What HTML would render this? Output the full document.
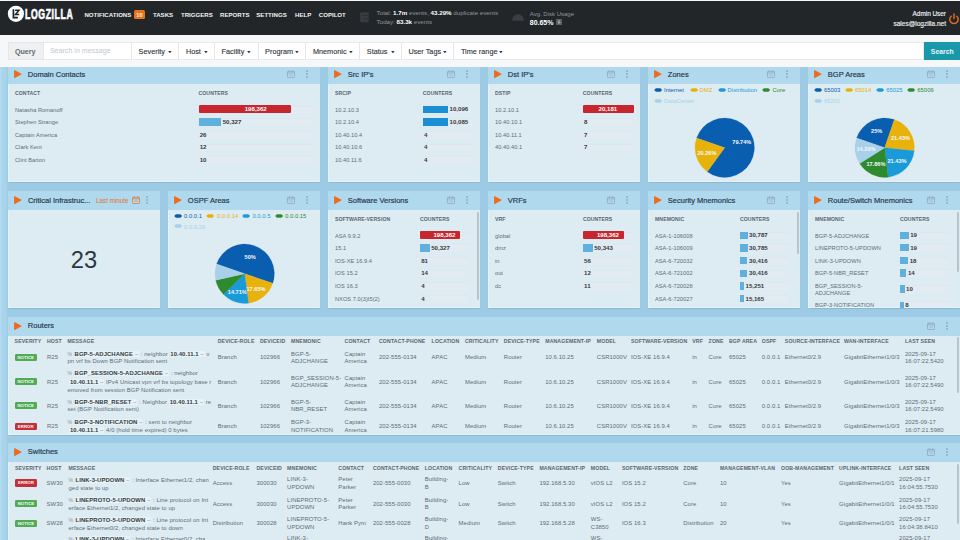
<!DOCTYPE html>
<html><head><meta charset="utf-8"><style>
html,body{margin:0;padding:0;width:960px;height:540px;overflow:hidden;background:#f6f7f9;font-family:"Liberation Sans", sans-serif;}
.t{position:absolute;white-space:nowrap;line-height:1;}
.r{position:absolute;}
svg{position:absolute;overflow:visible;}
</style></head><body>

<div class="r" style="left:0.00px;top:1.00px;width:960.00px;height:34.00px;background:#222629;"></div>
<svg style="left:0;top:0" width="80" height="35" viewBox="0 0 80 35"><circle cx="15.9" cy="13.8" r="8.1" fill="#fff"/><path d="M13.4 9.3 V17.7 H17.9" stroke="#1f2226" stroke-width="1.7" fill="none"/><path d="M15.1 10.2 H19.0 L15.4 14.5 H19.2" stroke="#1f2226" stroke-width="1.5" fill="none" stroke-linejoin="miter"/></svg>
<div class="t" style="left:25.3px;top:6.6px;font-size:14px;font-weight:bold;color:#fff;transform:scaleX(0.62);transform-origin:0 0;letter-spacing:1.0px;-webkit-text-stroke:0.7px #fff">LOGZILLA</div>
<div class="t" style="left:84.40px;top:12.00px;font-size:6.1px;color:#f2f2f2;font-weight:bold;">NOTIFICATIONS</div>
<div class="t" style="left:152.90px;top:12.00px;font-size:6.1px;color:#f2f2f2;font-weight:bold;">TASKS</div>
<div class="t" style="left:181.00px;top:12.00px;font-size:6.1px;color:#f2f2f2;font-weight:bold;">TRIGGERS</div>
<div class="t" style="left:220.00px;top:12.00px;font-size:6.1px;color:#f2f2f2;font-weight:bold;">REPORTS</div>
<div class="t" style="left:256.25px;top:12.00px;font-size:6.1px;color:#f2f2f2;font-weight:bold;">SETTINGS</div>
<div class="t" style="left:295.00px;top:12.00px;font-size:6.1px;color:#f2f2f2;font-weight:bold;">HELP</div>
<div class="t" style="left:318.75px;top:12.00px;font-size:6.1px;color:#f2f2f2;font-weight:bold;">COPILOT</div>
<div class="r" style="left:134.00px;top:10.25px;width:10.75px;height:8.75px;background:#e8731c;border-radius:1.5px"></div>
<div class="t" style="left:-60.60px;width:400px;text-align:center;top:13.00px;font-size:5.6px;color:#fde7d0;font-weight:bold;">10</div>
<svg style="left:359.8px;top:11.8px" width="9" height="10.4" viewBox="0 0 9 10.4"><path d="M1.2 0.2 H7.6 Q8.7 0.2 8.7 1.3 V9.2 Q8.7 10.2 7.6 10.2 H1.2 Q0.2 10.2 0.2 9.2 V1.3 Q0.2 0.2 1.2 0.2Z" fill="#393d43"/><path d="M2.6 3.6 H8.7 M2.6 6.9 H8.7" stroke="#24272b" stroke-width="0.7"/></svg>
<div class="t" style="left:376.6px;top:10px;font-size:6.2px;color:#90959c">Total: <b style="color:#fff">1.7m</b> events, <b style="color:#fff">43.29%</b> duplicate events</div>
<div class="t" style="left:376.6px;top:19px;font-size:6.2px;color:#90959c">Today: <b style="color:#fff">83.3k</b> events</div>
<svg style="left:511px;top:12px" width="14" height="10" viewBox="0 0 14 10"><path d="M1 8.8 A6 6.5 0 0 1 13 8.8 Z" fill="#3b3f45"/></svg>
<div class="t" style="left:529.75px;top:11.00px;font-size:6.0px;color:#90959c;font-weight:normal;">Avg. Disk Usage</div>
<div class="t" style="left:529.75px;top:19.00px;font-size:7.0px;color:#fff;font-weight:bold;">80.65%</div>
<div class="r" style="left:555.60px;top:19.20px;width:6.20px;height:5.40px;background:#5a5e64;border-radius:0.5px"></div>
<svg style="left:555.6px;top:19.2px" width="6.2" height="5.4" viewBox="0 0 6.2 5.4"><path d="M3.1 0.9 V4.3 M1.8 3.1 L3.1 4.4 L4.4 3.1" stroke="#d0d2d4" stroke-width="0.7" fill="none"/></svg>
<div class="t" style="right:14.00px;top:11.00px;font-size:6.4px;color:#f0f0f0;font-weight:normal;-webkit-text-stroke:0.15px #f0f0f0">Admin User</div>
<div class="t" style="right:14.00px;top:21.00px;font-size:6.5px;color:#f0f0f0;font-weight:normal;-webkit-text-stroke:0.15px #f0f0f0">sales@logzilla.net</div>
<svg style="left:948px;top:12.5px" width="12" height="12" viewBox="0 0 12 12"><path d="M3.2 3.2 A4.2 4.2 0 1 0 8.8 3.2" stroke="#e06a24" stroke-width="1.5" fill="none" stroke-linecap="round"/><path d="M6 1 V5.4" stroke="#e06a24" stroke-width="1.5" stroke-linecap="round"/></svg>
<div class="r" style="left:8.00px;top:42.00px;width:916.00px;height:17.60px;background:#fff;box-shadow:inset 0 0 0 0.8px #e1e4e8"></div>
<div class="r" style="left:8.00px;top:42.00px;width:36.00px;height:17.60px;background:#eef0f2;box-shadow:inset 0 0 0 0.8px #e1e4e8"></div>
<div class="t" style="left:14.90px;top:49.00px;font-size:7.16px;color:#666b70;font-weight:bold;">Query</div>
<div class="t" style="left:49.90px;top:48.00px;font-size:7.1px;color:#c4c8cc;font-weight:normal;">Search in message</div>
<div class="r" style="left:178.30px;top:42.00px;width:0.70px;height:17.60px;background:#e4e7ea;"></div>
<div class="t" style="left:138.60px;top:48px;font-size:7.3px;color:#30363c;-webkit-text-stroke:0.12px #30363c">Severity</div>
<svg style="left:168.10px;top:50.50px" width="4" height="2.4" viewBox="0 0 4 2.4"><path d="M0.1 0.1 H3.7 L1.9 2.2Z" fill="#30363c"/></svg>
<div class="r" style="left:214.00px;top:42.00px;width:0.70px;height:17.60px;background:#e4e7ea;"></div>
<div class="t" style="left:185.90px;top:48px;font-size:7.3px;color:#30363c;-webkit-text-stroke:0.12px #30363c">Host</div>
<svg style="left:203.80px;top:50.50px" width="4" height="2.4" viewBox="0 0 4 2.4"><path d="M0.1 0.1 H3.7 L1.9 2.2Z" fill="#30363c"/></svg>
<div class="r" style="left:257.50px;top:42.00px;width:0.70px;height:17.60px;background:#e4e7ea;"></div>
<div class="t" style="left:221.60px;top:48px;font-size:7.3px;color:#30363c;-webkit-text-stroke:0.12px #30363c">Facility</div>
<svg style="left:247.30px;top:50.50px" width="4" height="2.4" viewBox="0 0 4 2.4"><path d="M0.1 0.1 H3.7 L1.9 2.2Z" fill="#30363c"/></svg>
<div class="r" style="left:305.30px;top:42.00px;width:0.70px;height:17.60px;background:#e4e7ea;"></div>
<div class="t" style="left:265.10px;top:48px;font-size:7.3px;color:#30363c;-webkit-text-stroke:0.12px #30363c">Program</div>
<svg style="left:295.10px;top:50.50px" width="4" height="2.4" viewBox="0 0 4 2.4"><path d="M0.1 0.1 H3.7 L1.9 2.2Z" fill="#30363c"/></svg>
<div class="r" style="left:359.20px;top:42.00px;width:0.70px;height:17.60px;background:#e4e7ea;"></div>
<div class="t" style="left:312.90px;top:48px;font-size:7.3px;color:#30363c;-webkit-text-stroke:0.12px #30363c">Mnemonic</div>
<svg style="left:349.00px;top:50.50px" width="4" height="2.4" viewBox="0 0 4 2.4"><path d="M0.1 0.1 H3.7 L1.9 2.2Z" fill="#30363c"/></svg>
<div class="r" style="left:400.80px;top:42.00px;width:0.70px;height:17.60px;background:#e4e7ea;"></div>
<div class="t" style="left:366.80px;top:48px;font-size:7.3px;color:#30363c;-webkit-text-stroke:0.12px #30363c">Status</div>
<svg style="left:390.60px;top:50.50px" width="4" height="2.4" viewBox="0 0 4 2.4"><path d="M0.1 0.1 H3.7 L1.9 2.2Z" fill="#30363c"/></svg>
<div class="r" style="left:453.30px;top:42.00px;width:0.70px;height:17.60px;background:#e4e7ea;"></div>
<div class="t" style="left:408.40px;top:48px;font-size:7.3px;color:#30363c;-webkit-text-stroke:0.12px #30363c">User Tags</div>
<svg style="left:443.10px;top:50.50px" width="4" height="2.4" viewBox="0 0 4 2.4"><path d="M0.1 0.1 H3.7 L1.9 2.2Z" fill="#30363c"/></svg>
<div class="t" style="left:460.90px;top:48px;font-size:7.3px;color:#30363c;-webkit-text-stroke:0.12px #30363c">Time range</div>
<svg style="left:499.40px;top:50.50px" width="4" height="2.4" viewBox="0 0 4 2.4"><path d="M0.1 0.1 H3.7 L1.9 2.2Z" fill="#30363c"/></svg>
<div class="r" style="left:131.00px;top:42.00px;width:0.70px;height:17.60px;background:#e4e7ea;"></div>
<div class="r" style="left:923.75px;top:42.00px;width:36.25px;height:17.60px;background:#1898a8;"></div>
<div class="t" style="left:742.30px;width:400px;text-align:center;top:49.00px;font-size:6.9px;color:#eaf6f8;font-weight:bold;">Search</div>
<div class="r" style="left:0.00px;top:66.50px;width:960.00px;height:480.00px;background:#9dcbe5;"></div>
<div class="r" style="left:0.00px;top:66.50px;width:8.00px;height:480.00px;background:linear-gradient(to right,#bde0f2 0,#abd6ed 1.2px,#a6d2eb 6px,#9ccbe4 8px);"></div>
<div class="r" style="left:8.00px;top:67.00px;width:312.00px;height:17.00px;background:#b0d9ee;"></div>
<div class="r" style="left:8.00px;top:84.00px;width:312.00px;height:98.20px;background:#ddecf2;box-shadow:0 0.9px 0.9px rgba(70,120,150,0.22), inset 0 -0.8px 0 rgba(245,252,255,0.55), inset 0.8px 0 0 rgba(245,252,255,0.45)"></div>
<svg style="left:13.90px;top:70.00px" width="8" height="9" viewBox="0 0 8 9"><path d="M0.5 0.5 L7.2 4.1 L0.5 7.7 Z" fill="#ec6a1c" stroke="#ec6a1c" stroke-width="0.8" stroke-linejoin="round"/></svg>
<div class="t" style="left:27.80px;top:71.00px;font-size:7.5px;color:#27384a;font-weight:normal;-webkit-text-stroke:0.18px #27384a">Domain Contacts</div>
<svg style="left:287.00px;top:70.40px" width="8" height="8" viewBox="0 0 8 8"><rect x="0.5" y="1.3" width="7" height="6.2" rx="0.6" stroke="#8aa3b4" stroke-width="0.7" fill="none"/><path d="M0.5 2.9 H7.5 M2.2 0.3 V2 M5.8 0.3 V2" stroke="#8aa3b4" stroke-width="0.7"/><rect x="2.2" y="4.3" width="3.6" height="1.6" fill="#8aa3b4" opacity="0.35"/></svg>
<svg style="left:305.70px;top:70.20px" width="2" height="8" viewBox="0 0 2 8"><circle cx="1" cy="1" r="0.8" fill="#7d93a3"/><circle cx="1" cy="4" r="0.8" fill="#7d93a3"/><circle cx="1" cy="7" r="0.8" fill="#7d93a3"/></svg>
<div class="r" style="left:328.00px;top:67.00px;width:152.00px;height:17.00px;background:#b0d9ee;"></div>
<div class="r" style="left:328.00px;top:84.00px;width:152.00px;height:98.20px;background:#ddecf2;box-shadow:0 0.9px 0.9px rgba(70,120,150,0.22), inset 0 -0.8px 0 rgba(245,252,255,0.55), inset 0.8px 0 0 rgba(245,252,255,0.45)"></div>
<svg style="left:333.90px;top:70.00px" width="8" height="9" viewBox="0 0 8 9"><path d="M0.5 0.5 L7.2 4.1 L0.5 7.7 Z" fill="#ec6a1c" stroke="#ec6a1c" stroke-width="0.8" stroke-linejoin="round"/></svg>
<div class="t" style="left:347.80px;top:71.00px;font-size:7.5px;color:#27384a;font-weight:normal;-webkit-text-stroke:0.18px #27384a">Src IP's</div>
<svg style="left:447.00px;top:70.40px" width="8" height="8" viewBox="0 0 8 8"><rect x="0.5" y="1.3" width="7" height="6.2" rx="0.6" stroke="#8aa3b4" stroke-width="0.7" fill="none"/><path d="M0.5 2.9 H7.5 M2.2 0.3 V2 M5.8 0.3 V2" stroke="#8aa3b4" stroke-width="0.7"/><rect x="2.2" y="4.3" width="3.6" height="1.6" fill="#8aa3b4" opacity="0.35"/></svg>
<svg style="left:465.70px;top:70.20px" width="2" height="8" viewBox="0 0 2 8"><circle cx="1" cy="1" r="0.8" fill="#7d93a3"/><circle cx="1" cy="4" r="0.8" fill="#7d93a3"/><circle cx="1" cy="7" r="0.8" fill="#7d93a3"/></svg>
<div class="r" style="left:488.00px;top:67.00px;width:152.00px;height:17.00px;background:#b0d9ee;"></div>
<div class="r" style="left:488.00px;top:84.00px;width:152.00px;height:98.20px;background:#ddecf2;box-shadow:0 0.9px 0.9px rgba(70,120,150,0.22), inset 0 -0.8px 0 rgba(245,252,255,0.55), inset 0.8px 0 0 rgba(245,252,255,0.45)"></div>
<svg style="left:493.90px;top:70.00px" width="8" height="9" viewBox="0 0 8 9"><path d="M0.5 0.5 L7.2 4.1 L0.5 7.7 Z" fill="#ec6a1c" stroke="#ec6a1c" stroke-width="0.8" stroke-linejoin="round"/></svg>
<div class="t" style="left:507.80px;top:71.00px;font-size:7.5px;color:#27384a;font-weight:normal;-webkit-text-stroke:0.18px #27384a">Dst IP's</div>
<svg style="left:607.00px;top:70.40px" width="8" height="8" viewBox="0 0 8 8"><rect x="0.5" y="1.3" width="7" height="6.2" rx="0.6" stroke="#8aa3b4" stroke-width="0.7" fill="none"/><path d="M0.5 2.9 H7.5 M2.2 0.3 V2 M5.8 0.3 V2" stroke="#8aa3b4" stroke-width="0.7"/><rect x="2.2" y="4.3" width="3.6" height="1.6" fill="#8aa3b4" opacity="0.35"/></svg>
<svg style="left:625.70px;top:70.20px" width="2" height="8" viewBox="0 0 2 8"><circle cx="1" cy="1" r="0.8" fill="#7d93a3"/><circle cx="1" cy="4" r="0.8" fill="#7d93a3"/><circle cx="1" cy="7" r="0.8" fill="#7d93a3"/></svg>
<div class="r" style="left:648.00px;top:67.00px;width:152.00px;height:17.00px;background:#b0d9ee;"></div>
<div class="r" style="left:648.00px;top:84.00px;width:152.00px;height:98.20px;background:#ddecf2;box-shadow:0 0.9px 0.9px rgba(70,120,150,0.22), inset 0 -0.8px 0 rgba(245,252,255,0.55), inset 0.8px 0 0 rgba(245,252,255,0.45)"></div>
<svg style="left:653.90px;top:70.00px" width="8" height="9" viewBox="0 0 8 9"><path d="M0.5 0.5 L7.2 4.1 L0.5 7.7 Z" fill="#ec6a1c" stroke="#ec6a1c" stroke-width="0.8" stroke-linejoin="round"/></svg>
<div class="t" style="left:667.80px;top:71.00px;font-size:7.5px;color:#27384a;font-weight:normal;-webkit-text-stroke:0.18px #27384a">Zones</div>
<svg style="left:767.00px;top:70.40px" width="8" height="8" viewBox="0 0 8 8"><rect x="0.5" y="1.3" width="7" height="6.2" rx="0.6" stroke="#8aa3b4" stroke-width="0.7" fill="none"/><path d="M0.5 2.9 H7.5 M2.2 0.3 V2 M5.8 0.3 V2" stroke="#8aa3b4" stroke-width="0.7"/><rect x="2.2" y="4.3" width="3.6" height="1.6" fill="#8aa3b4" opacity="0.35"/></svg>
<svg style="left:785.70px;top:70.20px" width="2" height="8" viewBox="0 0 2 8"><circle cx="1" cy="1" r="0.8" fill="#7d93a3"/><circle cx="1" cy="4" r="0.8" fill="#7d93a3"/><circle cx="1" cy="7" r="0.8" fill="#7d93a3"/></svg>
<div class="r" style="left:808.00px;top:67.00px;width:152.00px;height:17.00px;background:#b0d9ee;"></div>
<div class="r" style="left:808.00px;top:84.00px;width:152.00px;height:98.20px;background:#ddecf2;box-shadow:0 0.9px 0.9px rgba(70,120,150,0.22), inset 0 -0.8px 0 rgba(245,252,255,0.55), inset 0.8px 0 0 rgba(245,252,255,0.45)"></div>
<svg style="left:813.90px;top:70.00px" width="8" height="9" viewBox="0 0 8 9"><path d="M0.5 0.5 L7.2 4.1 L0.5 7.7 Z" fill="#ec6a1c" stroke="#ec6a1c" stroke-width="0.8" stroke-linejoin="round"/></svg>
<div class="t" style="left:827.80px;top:71.00px;font-size:7.5px;color:#27384a;font-weight:normal;-webkit-text-stroke:0.18px #27384a">BGP Areas</div>
<svg style="left:927.00px;top:70.40px" width="8" height="8" viewBox="0 0 8 8"><rect x="0.5" y="1.3" width="7" height="6.2" rx="0.6" stroke="#8aa3b4" stroke-width="0.7" fill="none"/><path d="M0.5 2.9 H7.5 M2.2 0.3 V2 M5.8 0.3 V2" stroke="#8aa3b4" stroke-width="0.7"/><rect x="2.2" y="4.3" width="3.6" height="1.6" fill="#8aa3b4" opacity="0.35"/></svg>
<svg style="left:945.70px;top:70.20px" width="2" height="8" viewBox="0 0 2 8"><circle cx="1" cy="1" r="0.8" fill="#7d93a3"/><circle cx="1" cy="4" r="0.8" fill="#7d93a3"/><circle cx="1" cy="7" r="0.8" fill="#7d93a3"/></svg>
<div class="r" style="left:8.00px;top:190.60px;width:152.00px;height:19.40px;background:#b0d9ee;"></div>
<div class="r" style="left:8.00px;top:210.00px;width:152.00px;height:98.30px;background:#ddecf2;box-shadow:0 0.9px 0.9px rgba(70,120,150,0.22), inset 0 -0.8px 0 rgba(245,252,255,0.55), inset 0.8px 0 0 rgba(245,252,255,0.45)"></div>
<svg style="left:13.90px;top:196.00px" width="8" height="9" viewBox="0 0 8 9"><path d="M0.5 0.5 L7.2 4.1 L0.5 7.7 Z" fill="#ec6a1c" stroke="#ec6a1c" stroke-width="0.8" stroke-linejoin="round"/></svg>
<div class="t" style="left:27.90px;top:197.00px;font-size:7.5px;color:#27384a;font-weight:normal;-webkit-text-stroke:0.18px #27384a">Critical Infrastruc...</div>
<div class="t" style="left:96.00px;top:198.00px;font-size:6.3px;color:#e0732c;font-weight:normal;">Last minute</div>
<svg style="left:131.50px;top:196.40px" width="8" height="8" viewBox="0 0 8 8"><rect x="0.5" y="1.3" width="7" height="6.2" rx="0.6" stroke="#e0732c" stroke-width="0.7" fill="none"/><path d="M0.5 2.9 H7.5 M2.2 0.3 V2 M5.8 0.3 V2" stroke="#e0732c" stroke-width="0.7"/><rect x="2.2" y="4.3" width="3.6" height="1.6" fill="#e0732c" opacity="0.35"/></svg>
<svg style="left:145.80px;top:196.20px" width="2" height="8" viewBox="0 0 2 8"><circle cx="1" cy="1" r="0.8" fill="#7d93a3"/><circle cx="1" cy="4" r="0.8" fill="#7d93a3"/><circle cx="1" cy="7" r="0.8" fill="#7d93a3"/></svg>
<div class="t" style="left:-116.00px;width:400px;text-align:center;top:249.00px;font-size:23.7px;color:#2b3640;font-weight:normal;">23</div>
<div class="r" style="left:168.00px;top:190.60px;width:152.00px;height:19.40px;background:#b0d9ee;"></div>
<div class="r" style="left:168.00px;top:210.00px;width:152.00px;height:98.30px;background:#ddecf2;box-shadow:0 0.9px 0.9px rgba(70,120,150,0.22), inset 0 -0.8px 0 rgba(245,252,255,0.55), inset 0.8px 0 0 rgba(245,252,255,0.45)"></div>
<svg style="left:173.90px;top:196.00px" width="8" height="9" viewBox="0 0 8 9"><path d="M0.5 0.5 L7.2 4.1 L0.5 7.7 Z" fill="#ec6a1c" stroke="#ec6a1c" stroke-width="0.8" stroke-linejoin="round"/></svg>
<div class="t" style="left:187.80px;top:197.00px;font-size:7.5px;color:#27384a;font-weight:normal;-webkit-text-stroke:0.18px #27384a">OSPF Areas</div>
<svg style="left:287.00px;top:196.40px" width="8" height="8" viewBox="0 0 8 8"><rect x="0.5" y="1.3" width="7" height="6.2" rx="0.6" stroke="#8aa3b4" stroke-width="0.7" fill="none"/><path d="M0.5 2.9 H7.5 M2.2 0.3 V2 M5.8 0.3 V2" stroke="#8aa3b4" stroke-width="0.7"/><rect x="2.2" y="4.3" width="3.6" height="1.6" fill="#8aa3b4" opacity="0.35"/></svg>
<svg style="left:305.70px;top:196.20px" width="2" height="8" viewBox="0 0 2 8"><circle cx="1" cy="1" r="0.8" fill="#7d93a3"/><circle cx="1" cy="4" r="0.8" fill="#7d93a3"/><circle cx="1" cy="7" r="0.8" fill="#7d93a3"/></svg>
<div class="r" style="left:328.00px;top:190.60px;width:152.00px;height:19.40px;background:#b0d9ee;"></div>
<div class="r" style="left:328.00px;top:210.00px;width:152.00px;height:98.30px;background:#ddecf2;box-shadow:0 0.9px 0.9px rgba(70,120,150,0.22), inset 0 -0.8px 0 rgba(245,252,255,0.55), inset 0.8px 0 0 rgba(245,252,255,0.45)"></div>
<svg style="left:333.90px;top:196.00px" width="8" height="9" viewBox="0 0 8 9"><path d="M0.5 0.5 L7.2 4.1 L0.5 7.7 Z" fill="#ec6a1c" stroke="#ec6a1c" stroke-width="0.8" stroke-linejoin="round"/></svg>
<div class="t" style="left:347.80px;top:197.00px;font-size:7.5px;color:#27384a;font-weight:normal;-webkit-text-stroke:0.18px #27384a">Software Versions</div>
<svg style="left:447.00px;top:196.40px" width="8" height="8" viewBox="0 0 8 8"><rect x="0.5" y="1.3" width="7" height="6.2" rx="0.6" stroke="#8aa3b4" stroke-width="0.7" fill="none"/><path d="M0.5 2.9 H7.5 M2.2 0.3 V2 M5.8 0.3 V2" stroke="#8aa3b4" stroke-width="0.7"/><rect x="2.2" y="4.3" width="3.6" height="1.6" fill="#8aa3b4" opacity="0.35"/></svg>
<svg style="left:465.70px;top:196.20px" width="2" height="8" viewBox="0 0 2 8"><circle cx="1" cy="1" r="0.8" fill="#7d93a3"/><circle cx="1" cy="4" r="0.8" fill="#7d93a3"/><circle cx="1" cy="7" r="0.8" fill="#7d93a3"/></svg>
<div class="r" style="left:488.00px;top:190.60px;width:152.00px;height:19.40px;background:#b0d9ee;"></div>
<div class="r" style="left:488.00px;top:210.00px;width:152.00px;height:98.30px;background:#ddecf2;box-shadow:0 0.9px 0.9px rgba(70,120,150,0.22), inset 0 -0.8px 0 rgba(245,252,255,0.55), inset 0.8px 0 0 rgba(245,252,255,0.45)"></div>
<svg style="left:493.90px;top:196.00px" width="8" height="9" viewBox="0 0 8 9"><path d="M0.5 0.5 L7.2 4.1 L0.5 7.7 Z" fill="#ec6a1c" stroke="#ec6a1c" stroke-width="0.8" stroke-linejoin="round"/></svg>
<div class="t" style="left:507.80px;top:197.00px;font-size:7.5px;color:#27384a;font-weight:normal;-webkit-text-stroke:0.18px #27384a">VRFs</div>
<svg style="left:607.00px;top:196.40px" width="8" height="8" viewBox="0 0 8 8"><rect x="0.5" y="1.3" width="7" height="6.2" rx="0.6" stroke="#8aa3b4" stroke-width="0.7" fill="none"/><path d="M0.5 2.9 H7.5 M2.2 0.3 V2 M5.8 0.3 V2" stroke="#8aa3b4" stroke-width="0.7"/><rect x="2.2" y="4.3" width="3.6" height="1.6" fill="#8aa3b4" opacity="0.35"/></svg>
<svg style="left:625.70px;top:196.20px" width="2" height="8" viewBox="0 0 2 8"><circle cx="1" cy="1" r="0.8" fill="#7d93a3"/><circle cx="1" cy="4" r="0.8" fill="#7d93a3"/><circle cx="1" cy="7" r="0.8" fill="#7d93a3"/></svg>
<div class="r" style="left:648.00px;top:190.60px;width:152.00px;height:19.40px;background:#b0d9ee;"></div>
<div class="r" style="left:648.00px;top:210.00px;width:152.00px;height:98.30px;background:#ddecf2;box-shadow:0 0.9px 0.9px rgba(70,120,150,0.22), inset 0 -0.8px 0 rgba(245,252,255,0.55), inset 0.8px 0 0 rgba(245,252,255,0.45)"></div>
<svg style="left:653.90px;top:196.00px" width="8" height="9" viewBox="0 0 8 9"><path d="M0.5 0.5 L7.2 4.1 L0.5 7.7 Z" fill="#ec6a1c" stroke="#ec6a1c" stroke-width="0.8" stroke-linejoin="round"/></svg>
<div class="t" style="left:667.80px;top:197.00px;font-size:7.5px;color:#27384a;font-weight:normal;-webkit-text-stroke:0.18px #27384a">Security Mnemonics</div>
<svg style="left:767.00px;top:196.40px" width="8" height="8" viewBox="0 0 8 8"><rect x="0.5" y="1.3" width="7" height="6.2" rx="0.6" stroke="#8aa3b4" stroke-width="0.7" fill="none"/><path d="M0.5 2.9 H7.5 M2.2 0.3 V2 M5.8 0.3 V2" stroke="#8aa3b4" stroke-width="0.7"/><rect x="2.2" y="4.3" width="3.6" height="1.6" fill="#8aa3b4" opacity="0.35"/></svg>
<svg style="left:785.70px;top:196.20px" width="2" height="8" viewBox="0 0 2 8"><circle cx="1" cy="1" r="0.8" fill="#7d93a3"/><circle cx="1" cy="4" r="0.8" fill="#7d93a3"/><circle cx="1" cy="7" r="0.8" fill="#7d93a3"/></svg>
<div class="r" style="left:808.00px;top:190.60px;width:152.00px;height:19.40px;background:#b0d9ee;"></div>
<div class="r" style="left:808.00px;top:210.00px;width:152.00px;height:98.30px;background:#ddecf2;box-shadow:0 0.9px 0.9px rgba(70,120,150,0.22), inset 0 -0.8px 0 rgba(245,252,255,0.55), inset 0.8px 0 0 rgba(245,252,255,0.45)"></div>
<svg style="left:813.90px;top:196.00px" width="8" height="9" viewBox="0 0 8 9"><path d="M0.5 0.5 L7.2 4.1 L0.5 7.7 Z" fill="#ec6a1c" stroke="#ec6a1c" stroke-width="0.8" stroke-linejoin="round"/></svg>
<div class="t" style="left:827.80px;top:197.00px;font-size:7.5px;color:#27384a;font-weight:normal;-webkit-text-stroke:0.18px #27384a">Route/Switch Mnemonics</div>
<svg style="left:927.00px;top:196.40px" width="8" height="8" viewBox="0 0 8 8"><rect x="0.5" y="1.3" width="7" height="6.2" rx="0.6" stroke="#8aa3b4" stroke-width="0.7" fill="none"/><path d="M0.5 2.9 H7.5 M2.2 0.3 V2 M5.8 0.3 V2" stroke="#8aa3b4" stroke-width="0.7"/><rect x="2.2" y="4.3" width="3.6" height="1.6" fill="#8aa3b4" opacity="0.35"/></svg>
<svg style="left:945.70px;top:196.20px" width="2" height="8" viewBox="0 0 2 8"><circle cx="1" cy="1" r="0.8" fill="#7d93a3"/><circle cx="1" cy="4" r="0.8" fill="#7d93a3"/><circle cx="1" cy="7" r="0.8" fill="#7d93a3"/></svg>
<div style="position:absolute;left:8.00px;top:84.00px;width:312.00px;height:98.20px;overflow:hidden"><div style="position:absolute;left:-8.00px;top:-84.00px;width:960px;height:540px">
<div class="t" style="left:15.00px;top:91.00px;font-size:5.15px;color:#5a646e;font-weight:bold;letter-spacing:0.08px">CONTACT</div>
<div class="t" style="left:198.50px;top:91.00px;font-size:5.15px;color:#5a646e;font-weight:bold;letter-spacing:0.08px">COUNTERS</div>
<div class="r" style="left:198.50px;top:105.60px;width:114.50px;height:7.60px;background:rgba(236,234,240,0.35);box-shadow:inset 0 0.6px 0 rgba(205,210,218,0.3)"></div>
<div class="t" style="left:15.00px;top:108.00px;font-size:5.65px;color:#606b76;font-weight:normal;letter-spacing:0.05px">Natasha Romanoff</div>
<div class="r" style="left:198.50px;top:105.40px;width:92.60px;height:8.00px;background:#c8262f;border-radius:1px"></div>
<div class="t" style="left:55.75px;width:400px;text-align:center;top:106.00px;font-size:6.1px;color:#fff;font-weight:bold;">198,362</div>
<div class="r" style="left:198.50px;top:118.25px;width:114.50px;height:7.60px;background:rgba(236,234,240,0.35);box-shadow:inset 0 0.6px 0 rgba(205,210,218,0.3)"></div>
<div class="t" style="left:15.00px;top:120.00px;font-size:5.65px;color:#606b76;font-weight:normal;letter-spacing:0.05px">Stephen Strange</div>
<div class="r" style="left:198.50px;top:118.35px;width:22.60px;height:7.40px;background:#5fb0dc;"></div>
<div class="t" style="left:222.70px;top:119.00px;font-size:6.1px;color:#343a40;font-weight:bold;">50,327</div>
<div class="r" style="left:198.50px;top:130.90px;width:114.50px;height:7.60px;background:rgba(236,234,240,0.35);box-shadow:inset 0 0.6px 0 rgba(205,210,218,0.3)"></div>
<div class="t" style="left:15.00px;top:133.00px;font-size:5.65px;color:#606b76;font-weight:normal;letter-spacing:0.05px">Captain America</div>
<div class="t" style="left:199.70px;top:132.00px;font-size:6.1px;color:#343a40;font-weight:bold;">26</div>
<div class="r" style="left:198.50px;top:143.55px;width:114.50px;height:7.60px;background:rgba(236,234,240,0.35);box-shadow:inset 0 0.6px 0 rgba(205,210,218,0.3)"></div>
<div class="t" style="left:15.00px;top:145.00px;font-size:5.65px;color:#606b76;font-weight:normal;letter-spacing:0.05px">Clark Kent</div>
<div class="t" style="left:199.70px;top:144.00px;font-size:6.1px;color:#343a40;font-weight:bold;">12</div>
<div class="r" style="left:198.50px;top:156.20px;width:114.50px;height:7.60px;background:rgba(236,234,240,0.35);box-shadow:inset 0 0.6px 0 rgba(205,210,218,0.3)"></div>
<div class="t" style="left:15.00px;top:158.00px;font-size:5.65px;color:#606b76;font-weight:normal;letter-spacing:0.05px">Clint Barton</div>
<div class="t" style="left:199.70px;top:157.00px;font-size:6.1px;color:#343a40;font-weight:bold;">10</div>
</div></div>
<div style="position:absolute;left:328.00px;top:84.00px;width:152.00px;height:98.20px;overflow:hidden"><div style="position:absolute;left:-328.00px;top:-84.00px;width:960px;height:540px">
<div class="t" style="left:335.00px;top:91.00px;font-size:5.15px;color:#5a646e;font-weight:bold;letter-spacing:0.08px">SRCIP</div>
<div class="t" style="left:422.80px;top:91.00px;font-size:5.15px;color:#5a646e;font-weight:bold;letter-spacing:0.08px">COUNTERS</div>
<div class="r" style="left:422.80px;top:105.60px;width:50.20px;height:7.60px;background:rgba(236,234,240,0.35);box-shadow:inset 0 0.6px 0 rgba(205,210,218,0.3)"></div>
<div class="t" style="left:335.00px;top:108.00px;font-size:5.65px;color:#606b76;font-weight:normal;letter-spacing:0.05px">10.2.10.3</div>
<div class="r" style="left:422.80px;top:105.70px;width:25.20px;height:7.40px;background:#1c8ed4;"></div>
<div class="t" style="left:449.60px;top:106.00px;font-size:6.1px;color:#343a40;font-weight:bold;">10,096</div>
<div class="r" style="left:422.80px;top:118.25px;width:50.20px;height:7.60px;background:rgba(236,234,240,0.35);box-shadow:inset 0 0.6px 0 rgba(205,210,218,0.3)"></div>
<div class="t" style="left:335.00px;top:120.00px;font-size:5.65px;color:#606b76;font-weight:normal;letter-spacing:0.05px">10.2.10.4</div>
<div class="r" style="left:422.80px;top:118.35px;width:25.20px;height:7.40px;background:#1c8ed4;"></div>
<div class="t" style="left:449.60px;top:119.00px;font-size:6.1px;color:#343a40;font-weight:bold;">10,085</div>
<div class="r" style="left:422.80px;top:130.90px;width:50.20px;height:7.60px;background:rgba(236,234,240,0.35);box-shadow:inset 0 0.6px 0 rgba(205,210,218,0.3)"></div>
<div class="t" style="left:335.00px;top:133.00px;font-size:5.65px;color:#606b76;font-weight:normal;letter-spacing:0.05px">10.40.10.4</div>
<div class="t" style="left:424.00px;top:132.00px;font-size:6.1px;color:#343a40;font-weight:bold;">4</div>
<div class="r" style="left:422.80px;top:143.55px;width:50.20px;height:7.60px;background:rgba(236,234,240,0.35);box-shadow:inset 0 0.6px 0 rgba(205,210,218,0.3)"></div>
<div class="t" style="left:335.00px;top:145.00px;font-size:5.65px;color:#606b76;font-weight:normal;letter-spacing:0.05px">10.40.10.6</div>
<div class="t" style="left:424.00px;top:144.00px;font-size:6.1px;color:#343a40;font-weight:bold;">4</div>
<div class="r" style="left:422.80px;top:156.20px;width:50.20px;height:7.60px;background:rgba(236,234,240,0.35);box-shadow:inset 0 0.6px 0 rgba(205,210,218,0.3)"></div>
<div class="t" style="left:335.00px;top:158.00px;font-size:5.65px;color:#606b76;font-weight:normal;letter-spacing:0.05px">10.40.11.6</div>
<div class="t" style="left:424.00px;top:157.00px;font-size:6.1px;color:#343a40;font-weight:bold;">4</div>
</div></div>
<div style="position:absolute;left:488.00px;top:84.00px;width:152.00px;height:98.20px;overflow:hidden"><div style="position:absolute;left:-488.00px;top:-84.00px;width:960px;height:540px">
<div class="t" style="left:495.00px;top:91.00px;font-size:5.15px;color:#5a646e;font-weight:bold;letter-spacing:0.08px">DSTIP</div>
<div class="t" style="left:582.80px;top:91.00px;font-size:5.15px;color:#5a646e;font-weight:bold;letter-spacing:0.08px">COUNTERS</div>
<div class="r" style="left:582.80px;top:105.60px;width:50.20px;height:7.60px;background:rgba(236,234,240,0.35);box-shadow:inset 0 0.6px 0 rgba(205,210,218,0.3)"></div>
<div class="t" style="left:495.00px;top:108.00px;font-size:5.65px;color:#606b76;font-weight:normal;letter-spacing:0.05px">10.2.10.1</div>
<div class="r" style="left:582.80px;top:105.40px;width:51.50px;height:8.00px;background:#c8262f;border-radius:1px"></div>
<div class="t" style="left:407.90px;width:400px;text-align:center;top:106.00px;font-size:6.1px;color:#fff;font-weight:bold;">20,181</div>
<div class="r" style="left:582.80px;top:118.25px;width:50.20px;height:7.60px;background:rgba(236,234,240,0.35);box-shadow:inset 0 0.6px 0 rgba(205,210,218,0.3)"></div>
<div class="t" style="left:495.00px;top:120.00px;font-size:5.65px;color:#606b76;font-weight:normal;letter-spacing:0.05px">10.40.10.1</div>
<div class="t" style="left:584.00px;top:119.00px;font-size:6.1px;color:#343a40;font-weight:bold;">8</div>
<div class="r" style="left:582.80px;top:130.90px;width:50.20px;height:7.60px;background:rgba(236,234,240,0.35);box-shadow:inset 0 0.6px 0 rgba(205,210,218,0.3)"></div>
<div class="t" style="left:495.00px;top:133.00px;font-size:5.65px;color:#606b76;font-weight:normal;letter-spacing:0.05px">10.40.11.1</div>
<div class="t" style="left:584.00px;top:132.00px;font-size:6.1px;color:#343a40;font-weight:bold;">7</div>
<div class="r" style="left:582.80px;top:143.55px;width:50.20px;height:7.60px;background:rgba(236,234,240,0.35);box-shadow:inset 0 0.6px 0 rgba(205,210,218,0.3)"></div>
<div class="t" style="left:495.00px;top:145.00px;font-size:5.65px;color:#606b76;font-weight:normal;letter-spacing:0.05px">40.40.40.1</div>
<div class="t" style="left:584.00px;top:144.00px;font-size:6.1px;color:#343a40;font-weight:bold;">7</div>
</div></div>
<div style="position:absolute;left:328.00px;top:210.00px;width:152.00px;height:98.30px;overflow:hidden"><div style="position:absolute;left:-328.00px;top:-210.00px;width:960px;height:540px">
<div class="t" style="left:335.00px;top:217.00px;font-size:5.15px;color:#5a646e;font-weight:bold;letter-spacing:0.08px">SOFTWARE-VERSION</div>
<div class="t" style="left:420.00px;top:217.00px;font-size:5.15px;color:#5a646e;font-weight:bold;letter-spacing:0.08px">COUNTERS</div>
<div class="r" style="left:420.00px;top:231.60px;width:49.00px;height:7.60px;background:rgba(236,234,240,0.35);box-shadow:inset 0 0.6px 0 rgba(205,210,218,0.3)"></div>
<div class="t" style="left:335.00px;top:234.00px;font-size:5.65px;color:#606b76;font-weight:normal;letter-spacing:0.05px">ASA 9.9.2</div>
<div class="r" style="left:420.00px;top:231.40px;width:40.00px;height:8.00px;background:#c8262f;border-radius:1px"></div>
<div class="t" style="left:244.50px;width:400px;text-align:center;top:232.00px;font-size:6.1px;color:#fff;font-weight:bold;">198,362</div>
<div class="r" style="left:420.00px;top:244.25px;width:49.00px;height:7.60px;background:rgba(236,234,240,0.35);box-shadow:inset 0 0.6px 0 rgba(205,210,218,0.3)"></div>
<div class="t" style="left:335.00px;top:246.00px;font-size:5.65px;color:#606b76;font-weight:normal;letter-spacing:0.05px">15.1</div>
<div class="r" style="left:420.00px;top:244.35px;width:9.60px;height:7.40px;background:#5fb0dc;"></div>
<div class="t" style="left:431.20px;top:245.00px;font-size:6.1px;color:#343a40;font-weight:bold;">50,327</div>
<div class="r" style="left:420.00px;top:256.90px;width:49.00px;height:7.60px;background:rgba(236,234,240,0.35);box-shadow:inset 0 0.6px 0 rgba(205,210,218,0.3)"></div>
<div class="t" style="left:335.00px;top:259.00px;font-size:5.65px;color:#606b76;font-weight:normal;letter-spacing:0.05px">IOS-XE 16.9.4</div>
<div class="t" style="left:421.20px;top:258.00px;font-size:6.1px;color:#343a40;font-weight:bold;">81</div>
<div class="r" style="left:420.00px;top:269.55px;width:49.00px;height:7.60px;background:rgba(236,234,240,0.35);box-shadow:inset 0 0.6px 0 rgba(205,210,218,0.3)"></div>
<div class="t" style="left:335.00px;top:271.00px;font-size:5.65px;color:#606b76;font-weight:normal;letter-spacing:0.05px">IOS 15.2</div>
<div class="t" style="left:421.20px;top:270.00px;font-size:6.1px;color:#343a40;font-weight:bold;">14</div>
<div class="r" style="left:420.00px;top:282.20px;width:49.00px;height:7.60px;background:rgba(236,234,240,0.35);box-shadow:inset 0 0.6px 0 rgba(205,210,218,0.3)"></div>
<div class="t" style="left:335.00px;top:284.00px;font-size:5.65px;color:#606b76;font-weight:normal;letter-spacing:0.05px">IOS 16.3</div>
<div class="t" style="left:421.20px;top:283.00px;font-size:6.1px;color:#343a40;font-weight:bold;">4</div>
<div class="r" style="left:420.00px;top:294.85px;width:49.00px;height:7.60px;background:rgba(236,234,240,0.35);box-shadow:inset 0 0.6px 0 rgba(205,210,218,0.3)"></div>
<div class="t" style="left:335.00px;top:297.00px;font-size:5.65px;color:#606b76;font-weight:normal;letter-spacing:0.05px">NXOS 7.0(3)I5(2)</div>
<div class="t" style="left:421.20px;top:296.00px;font-size:6.1px;color:#343a40;font-weight:bold;">4</div>
</div></div>
<div style="position:absolute;left:488.00px;top:210.00px;width:152.00px;height:98.30px;overflow:hidden"><div style="position:absolute;left:-488.00px;top:-210.00px;width:960px;height:540px">
<div class="t" style="left:495.00px;top:217.00px;font-size:5.15px;color:#5a646e;font-weight:bold;letter-spacing:0.08px">VRF</div>
<div class="t" style="left:582.90px;top:217.00px;font-size:5.15px;color:#5a646e;font-weight:bold;letter-spacing:0.08px">COUNTERS</div>
<div class="r" style="left:582.90px;top:231.60px;width:50.10px;height:7.60px;background:rgba(236,234,240,0.35);box-shadow:inset 0 0.6px 0 rgba(205,210,218,0.3)"></div>
<div class="t" style="left:495.00px;top:234.00px;font-size:5.65px;color:#606b76;font-weight:normal;letter-spacing:0.05px">global</div>
<div class="r" style="left:582.90px;top:231.40px;width:41.00px;height:8.00px;background:#c8262f;border-radius:1px"></div>
<div class="t" style="left:407.95px;width:400px;text-align:center;top:232.00px;font-size:6.1px;color:#fff;font-weight:bold;">198,362</div>
<div class="r" style="left:582.90px;top:244.25px;width:50.10px;height:7.60px;background:rgba(236,234,240,0.35);box-shadow:inset 0 0.6px 0 rgba(205,210,218,0.3)"></div>
<div class="t" style="left:495.00px;top:246.00px;font-size:5.65px;color:#606b76;font-weight:normal;letter-spacing:0.05px">dmz</div>
<div class="r" style="left:582.90px;top:244.35px;width:9.70px;height:7.40px;background:#5fb0dc;"></div>
<div class="t" style="left:594.20px;top:245.00px;font-size:6.1px;color:#343a40;font-weight:bold;">50,343</div>
<div class="r" style="left:582.90px;top:256.90px;width:50.10px;height:7.60px;background:rgba(236,234,240,0.35);box-shadow:inset 0 0.6px 0 rgba(205,210,218,0.3)"></div>
<div class="t" style="left:495.00px;top:259.00px;font-size:5.65px;color:#606b76;font-weight:normal;letter-spacing:0.05px">in</div>
<div class="t" style="left:584.10px;top:258.00px;font-size:6.1px;color:#343a40;font-weight:bold;">56</div>
<div class="r" style="left:582.90px;top:269.55px;width:50.10px;height:7.60px;background:rgba(236,234,240,0.35);box-shadow:inset 0 0.6px 0 rgba(205,210,218,0.3)"></div>
<div class="t" style="left:495.00px;top:271.00px;font-size:5.65px;color:#606b76;font-weight:normal;letter-spacing:0.05px">out</div>
<div class="t" style="left:584.10px;top:270.00px;font-size:6.1px;color:#343a40;font-weight:bold;">12</div>
<div class="r" style="left:582.90px;top:282.20px;width:50.10px;height:7.60px;background:rgba(236,234,240,0.35);box-shadow:inset 0 0.6px 0 rgba(205,210,218,0.3)"></div>
<div class="t" style="left:495.00px;top:284.00px;font-size:5.65px;color:#606b76;font-weight:normal;letter-spacing:0.05px">dc</div>
<div class="t" style="left:584.10px;top:283.00px;font-size:6.1px;color:#343a40;font-weight:bold;">11</div>
</div></div>
<div style="position:absolute;left:648.00px;top:210.00px;width:152.00px;height:98.30px;overflow:hidden"><div style="position:absolute;left:-648.00px;top:-210.00px;width:960px;height:540px">
<div class="t" style="left:655.00px;top:217.00px;font-size:5.15px;color:#5a646e;font-weight:bold;letter-spacing:0.08px">MNEMONIC</div>
<div class="t" style="left:740.00px;top:217.00px;font-size:5.15px;color:#5a646e;font-weight:bold;letter-spacing:0.08px">COUNTERS</div>
<div class="r" style="left:740.00px;top:231.60px;width:49.00px;height:7.60px;background:rgba(236,234,240,0.35);box-shadow:inset 0 0.6px 0 rgba(205,210,218,0.3)"></div>
<div class="t" style="left:655.00px;top:234.00px;font-size:5.65px;color:#606b76;font-weight:normal;letter-spacing:0.05px">ASA-1-106008</div>
<div class="r" style="left:740.00px;top:231.70px;width:7.50px;height:7.40px;background:#5fb0dc;"></div>
<div class="t" style="left:749.10px;top:232.00px;font-size:6.1px;color:#343a40;font-weight:bold;">30,787</div>
<div class="r" style="left:740.00px;top:244.25px;width:49.00px;height:7.60px;background:rgba(236,234,240,0.35);box-shadow:inset 0 0.6px 0 rgba(205,210,218,0.3)"></div>
<div class="t" style="left:655.00px;top:246.00px;font-size:5.65px;color:#606b76;font-weight:normal;letter-spacing:0.05px">ASA-1-106009</div>
<div class="r" style="left:740.00px;top:244.35px;width:7.50px;height:7.40px;background:#5fb0dc;"></div>
<div class="t" style="left:749.10px;top:245.00px;font-size:6.1px;color:#343a40;font-weight:bold;">30,785</div>
<div class="r" style="left:740.00px;top:256.90px;width:49.00px;height:7.60px;background:rgba(236,234,240,0.35);box-shadow:inset 0 0.6px 0 rgba(205,210,218,0.3)"></div>
<div class="t" style="left:655.00px;top:259.00px;font-size:5.65px;color:#606b76;font-weight:normal;letter-spacing:0.05px">ASA-6-720032</div>
<div class="r" style="left:740.00px;top:257.00px;width:7.40px;height:7.40px;background:#5fb0dc;"></div>
<div class="t" style="left:749.00px;top:258.00px;font-size:6.1px;color:#343a40;font-weight:bold;">30,416</div>
<div class="r" style="left:740.00px;top:269.55px;width:49.00px;height:7.60px;background:rgba(236,234,240,0.35);box-shadow:inset 0 0.6px 0 rgba(205,210,218,0.3)"></div>
<div class="t" style="left:655.00px;top:271.00px;font-size:5.65px;color:#606b76;font-weight:normal;letter-spacing:0.05px">ASA-6-721002</div>
<div class="r" style="left:740.00px;top:269.65px;width:7.40px;height:7.40px;background:#5fb0dc;"></div>
<div class="t" style="left:749.00px;top:270.00px;font-size:6.1px;color:#343a40;font-weight:bold;">30,416</div>
<div class="r" style="left:740.00px;top:282.20px;width:49.00px;height:7.60px;background:rgba(236,234,240,0.35);box-shadow:inset 0 0.6px 0 rgba(205,210,218,0.3)"></div>
<div class="t" style="left:655.00px;top:284.00px;font-size:5.65px;color:#606b76;font-weight:normal;letter-spacing:0.05px">ASA-6-720028</div>
<div class="r" style="left:740.00px;top:282.30px;width:4.00px;height:7.40px;background:#5fb0dc;"></div>
<div class="t" style="left:745.60px;top:283.00px;font-size:6.1px;color:#343a40;font-weight:bold;">15,251</div>
<div class="r" style="left:740.00px;top:294.85px;width:49.00px;height:7.60px;background:rgba(236,234,240,0.35);box-shadow:inset 0 0.6px 0 rgba(205,210,218,0.3)"></div>
<div class="t" style="left:655.00px;top:297.00px;font-size:5.65px;color:#606b76;font-weight:normal;letter-spacing:0.05px">ASA-6-720027</div>
<div class="r" style="left:740.00px;top:294.95px;width:3.90px;height:7.40px;background:#5fb0dc;"></div>
<div class="t" style="left:745.50px;top:296.00px;font-size:6.1px;color:#343a40;font-weight:bold;">15,165</div>
<div class="r" style="left:740.00px;top:307.50px;width:49.00px;height:7.60px;background:rgba(236,234,240,0.35);box-shadow:inset 0 0.6px 0 rgba(205,210,218,0.3)"></div>
<div class="t" style="left:655.00px;top:309.00px;font-size:5.65px;color:#606b76;font-weight:normal;letter-spacing:0.05px"></div>
<div class="r" style="left:740.00px;top:307.60px;width:3.90px;height:7.40px;background:#5fb0dc;"></div>
<div class="t" style="left:745.50px;top:308.00px;font-size:6.1px;color:#343a40;font-weight:bold;"></div>
</div></div>
<div style="position:absolute;left:808.00px;top:210.00px;width:152.00px;height:98.30px;overflow:hidden"><div style="position:absolute;left:-808.00px;top:-210.00px;width:960px;height:540px">
<div class="t" style="left:815.00px;top:217.00px;font-size:5.15px;color:#5a646e;font-weight:bold;letter-spacing:0.08px">MNEMONIC</div>
<div class="t" style="left:900.00px;top:217.00px;font-size:5.15px;color:#5a646e;font-weight:bold;letter-spacing:0.08px">COUNTERS</div>
<div class="r" style="left:900.00px;top:231.70px;width:49.00px;height:7.60px;background:rgba(236,234,240,0.35);box-shadow:inset 0 0.6px 0 rgba(205,210,218,0.3)"></div>
<div class="t" style="left:815.00px;top:234.00px;font-size:5.65px;color:#606b76;font-weight:normal;letter-spacing:0.05px">BGP-5-ADJCHANGE</div>
<div class="r" style="left:900.00px;top:231.80px;width:8.60px;height:7.40px;background:#5fb0dc;"></div>
<div class="t" style="left:910.20px;top:232.00px;font-size:6.1px;color:#343a40;font-weight:bold;">19</div>
<div class="r" style="left:900.00px;top:244.00px;width:49.00px;height:7.60px;background:rgba(236,234,240,0.35);box-shadow:inset 0 0.6px 0 rgba(205,210,218,0.3)"></div>
<div class="t" style="left:815.00px;top:246.00px;font-size:5.65px;color:#606b76;font-weight:normal;letter-spacing:0.05px">LINEPROTO-5-UPDOWN</div>
<div class="r" style="left:900.00px;top:244.10px;width:8.60px;height:7.40px;background:#5fb0dc;"></div>
<div class="t" style="left:910.20px;top:245.00px;font-size:6.1px;color:#343a40;font-weight:bold;">19</div>
<div class="r" style="left:900.00px;top:256.80px;width:49.00px;height:7.60px;background:rgba(236,234,240,0.35);box-shadow:inset 0 0.6px 0 rgba(205,210,218,0.3)"></div>
<div class="t" style="left:815.00px;top:259.00px;font-size:5.65px;color:#606b76;font-weight:normal;letter-spacing:0.05px">LINK-3-UPDOWN</div>
<div class="r" style="left:900.00px;top:256.90px;width:8.10px;height:7.40px;background:#5fb0dc;"></div>
<div class="t" style="left:909.70px;top:258.00px;font-size:6.1px;color:#343a40;font-weight:bold;">18</div>
<div class="r" style="left:900.00px;top:269.30px;width:49.00px;height:7.60px;background:rgba(236,234,240,0.35);box-shadow:inset 0 0.6px 0 rgba(205,210,218,0.3)"></div>
<div class="t" style="left:815.00px;top:271.00px;font-size:5.65px;color:#606b76;font-weight:normal;letter-spacing:0.05px">BGP-5-NBR_RESET</div>
<div class="r" style="left:900.00px;top:269.40px;width:6.30px;height:7.40px;background:#5fb0dc;"></div>
<div class="t" style="left:907.90px;top:270.00px;font-size:6.1px;color:#343a40;font-weight:bold;">14</div>
<div class="r" style="left:900.00px;top:285.30px;width:49.00px;height:7.60px;background:rgba(236,234,240,0.35);box-shadow:inset 0 0.6px 0 rgba(205,210,218,0.3)"></div>
<div class="t" style="left:815.00px;top:284.00px;font-size:5.65px;color:#606b76;font-weight:normal;letter-spacing:0.05px">BGP_SESSION-5-</div>
<div class="t" style="left:815.00px;top:291.00px;font-size:5.65px;color:#606b76;font-weight:normal;letter-spacing:0.05px">ADJCHANGE</div>
<div class="r" style="left:900.00px;top:285.40px;width:4.50px;height:7.40px;background:#5fb0dc;"></div>
<div class="t" style="left:906.10px;top:286.00px;font-size:6.1px;color:#343a40;font-weight:bold;">10</div>
<div class="r" style="left:900.00px;top:301.40px;width:49.00px;height:7.60px;background:rgba(236,234,240,0.35);box-shadow:inset 0 0.6px 0 rgba(205,210,218,0.3)"></div>
<div class="t" style="left:815.00px;top:303.00px;font-size:5.65px;color:#606b76;font-weight:normal;letter-spacing:0.05px">BGP-3-NOTIFICATION</div>
<div class="r" style="left:900.00px;top:301.50px;width:3.60px;height:7.40px;background:#5fb0dc;"></div>
<div class="t" style="left:905.20px;top:302.00px;font-size:6.1px;color:#343a40;font-weight:bold;">8</div>
</div></div>
<div class="r" style="left:477.00px;top:211.80px;width:1.60px;height:88.20px;background:#b9c3ca;border-radius:1px"></div>
<div class="r" style="left:797.00px;top:211.80px;width:1.60px;height:41.80px;background:#b9c3ca;border-radius:1px"></div>
<div class="r" style="left:957.00px;top:211.80px;width:1.60px;height:60.20px;background:#b9c3ca;border-radius:1px"></div>
<svg style="left:653.50px;top:87.90px" width="9" height="4" viewBox="0 0 9 4"><path d="M0.1 2 L1.2 0.9 Q1.5 0.35 2.2 0.35 H6.1 Q6.8 0.35 7.1 0.9 L8.2 2 L7.1 3.1 Q6.8 3.65 6.1 3.65 H2.2 Q1.5 3.65 1.2 3.1 Z" fill="#0a5eb0"/></svg>
<div class="t" style="left:664.00px;top:88.00px;font-size:5.9px;color:#0a5eb0;font-weight:normal;">Internet</div>
<svg style="left:689.80px;top:87.90px" width="9" height="4" viewBox="0 0 9 4"><path d="M0.1 2 L1.2 0.9 Q1.5 0.35 2.2 0.35 H6.1 Q6.8 0.35 7.1 0.9 L8.2 2 L7.1 3.1 Q6.8 3.65 6.1 3.65 H2.2 Q1.5 3.65 1.2 3.1 Z" fill="#e8b10c"/></svg>
<div class="t" style="left:699.50px;top:88.00px;font-size:5.9px;color:#e8b10c;font-weight:normal;">DMZ</div>
<svg style="left:717.60px;top:87.90px" width="9" height="4" viewBox="0 0 9 4"><path d="M0.1 2 L1.2 0.9 Q1.5 0.35 2.2 0.35 H6.1 Q6.8 0.35 7.1 0.9 L8.2 2 L7.1 3.1 Q6.8 3.65 6.1 3.65 H2.2 Q1.5 3.65 1.2 3.1 Z" fill="#1b9ad9"/></svg>
<div class="t" style="left:727.60px;top:88.00px;font-size:5.9px;color:#1b9ad9;font-weight:normal;">Distribution</div>
<svg style="left:762.40px;top:87.90px" width="9" height="4" viewBox="0 0 9 4"><path d="M0.1 2 L1.2 0.9 Q1.5 0.35 2.2 0.35 H6.1 Q6.8 0.35 7.1 0.9 L8.2 2 L7.1 3.1 Q6.8 3.65 6.1 3.65 H2.2 Q1.5 3.65 1.2 3.1 Z" fill="#2e8a2e"/></svg>
<div class="t" style="left:772.40px;top:88.00px;font-size:5.9px;color:#2e8a2e;font-weight:normal;">Core</div>
<svg style="left:653.50px;top:98.70px" width="9" height="4" viewBox="0 0 9 4"><path d="M0.1 2 L1.2 0.9 Q1.5 0.35 2.2 0.35 H6.1 Q6.8 0.35 7.1 0.9 L8.2 2 L7.1 3.1 Q6.8 3.65 6.1 3.65 H2.2 Q1.5 3.65 1.2 3.1 Z" fill="#a8d0e8"/></svg>
<div class="t" style="left:664.00px;top:99.00px;font-size:5.9px;color:#a8d0e8;font-weight:normal;">DataCenter</div>
<svg style="left:694.80px;top:118.20px" width="59.4" height="59.4" viewBox="-29.7 -29.7 59.4 59.4"><path d="M0 0 L-28.082 -9.669 A29.7 29.7 0 1 1 -17.484 24.008 Z" fill="#0a5eb0" stroke="#0a5eb0" stroke-width="0.2"/><path d="M0 0 L-17.484 24.008 A29.7 29.7 0 0 1 -28.082 -9.669 Z" fill="#e8b10c" stroke="#e8b10c" stroke-width="0.2"/></svg>
<div class="t" style="left:541.80px;width:400px;text-align:center;top:140.00px;font-size:5.6px;color:#f4f8fb;font-weight:bold;">79.74%</div>
<div class="t" style="left:506.90px;width:400px;text-align:center;top:151.00px;font-size:5.6px;color:#f4f8fb;font-weight:bold;">20.26%</div>
<svg style="left:813.60px;top:87.90px" width="9" height="4" viewBox="0 0 9 4"><path d="M0.1 2 L1.2 0.9 Q1.5 0.35 2.2 0.35 H6.1 Q6.8 0.35 7.1 0.9 L8.2 2 L7.1 3.1 Q6.8 3.65 6.1 3.65 H2.2 Q1.5 3.65 1.2 3.1 Z" fill="#0a5eb0"/></svg>
<div class="t" style="left:824.00px;top:88.00px;font-size:5.9px;color:#0a5eb0;font-weight:normal;">65003</div>
<svg style="left:844.70px;top:87.90px" width="9" height="4" viewBox="0 0 9 4"><path d="M0.1 2 L1.2 0.9 Q1.5 0.35 2.2 0.35 H6.1 Q6.8 0.35 7.1 0.9 L8.2 2 L7.1 3.1 Q6.8 3.65 6.1 3.65 H2.2 Q1.5 3.65 1.2 3.1 Z" fill="#e8b10c"/></svg>
<div class="t" style="left:855.00px;top:88.00px;font-size:5.9px;color:#e8b10c;font-weight:normal;">65014</div>
<svg style="left:875.80px;top:87.90px" width="9" height="4" viewBox="0 0 9 4"><path d="M0.1 2 L1.2 0.9 Q1.5 0.35 2.2 0.35 H6.1 Q6.8 0.35 7.1 0.9 L8.2 2 L7.1 3.1 Q6.8 3.65 6.1 3.65 H2.2 Q1.5 3.65 1.2 3.1 Z" fill="#1b9ad9"/></svg>
<div class="t" style="left:886.20px;top:88.00px;font-size:5.9px;color:#1b9ad9;font-weight:normal;">65025</div>
<svg style="left:906.90px;top:87.90px" width="9" height="4" viewBox="0 0 9 4"><path d="M0.1 2 L1.2 0.9 Q1.5 0.35 2.2 0.35 H6.1 Q6.8 0.35 7.1 0.9 L8.2 2 L7.1 3.1 Q6.8 3.65 6.1 3.65 H2.2 Q1.5 3.65 1.2 3.1 Z" fill="#2e8a2e"/></svg>
<div class="t" style="left:917.30px;top:88.00px;font-size:5.9px;color:#2e8a2e;font-weight:normal;">65006</div>
<svg style="left:813.60px;top:98.70px" width="9" height="4" viewBox="0 0 9 4"><path d="M0.1 2 L1.2 0.9 Q1.5 0.35 2.2 0.35 H6.1 Q6.8 0.35 7.1 0.9 L8.2 2 L7.1 3.1 Q6.8 3.65 6.1 3.65 H2.2 Q1.5 3.65 1.2 3.1 Z" fill="#a8d0e8"/></svg>
<div class="t" style="left:824.00px;top:99.00px;font-size:5.9px;color:#a8d0e8;font-weight:normal;">65201</div>
<svg style="left:854.80px;top:118.10px" width="59.4" height="59.4" viewBox="-29.7 -29.7 59.4 59.4"><path d="M0 0 L-28.082 -9.669 A29.7 29.7 0 0 1 9.665 -28.083 Z" fill="#0a5eb0" stroke="#0a5eb0" stroke-width="0.2"/><path d="M0 0 L9.665 -28.083 A29.7 29.7 0 0 1 29.530 3.172 Z" fill="#e8b10c" stroke="#e8b10c" stroke-width="0.2"/><path d="M0 0 L29.530 3.172 A29.7 29.7 0 0 1 3.480 29.495 Z" fill="#1b9ad9" stroke="#1b9ad9" stroke-width="0.2"/><path d="M0 0 L3.480 29.495 A29.7 29.7 0 0 1 -25.066 15.931 Z" fill="#2e8a2e" stroke="#2e8a2e" stroke-width="0.2"/><path d="M0 0 L-25.066 15.931 A29.7 29.7 0 0 1 -28.082 -9.669 Z" fill="#a8d0e8" stroke="#a8d0e8" stroke-width="0.2"/></svg>
<div class="t" style="left:676.70px;width:400px;text-align:center;top:129.00px;font-size:5.6px;color:#f4f8fb;font-weight:bold;">25%</div>
<div class="t" style="left:700.50px;width:400px;text-align:center;top:136.00px;font-size:5.6px;color:#f4f8fb;font-weight:bold;">21.43%</div>
<div class="t" style="left:697.00px;width:400px;text-align:center;top:159.00px;font-size:5.6px;color:#f4f8fb;font-weight:bold;">21.43%</div>
<div class="t" style="left:675.90px;width:400px;text-align:center;top:162.00px;font-size:5.6px;color:#f4f8fb;font-weight:bold;">17.86%</div>
<div class="t" style="left:666.00px;width:400px;text-align:center;top:147.00px;font-size:5.6px;color:#f4f8fb;font-weight:bold;">14.29%</div>
<svg style="left:173.60px;top:213.60px" width="9" height="4" viewBox="0 0 9 4"><path d="M0.1 2 L1.2 0.9 Q1.5 0.35 2.2 0.35 H6.1 Q6.8 0.35 7.1 0.9 L8.2 2 L7.1 3.1 Q6.8 3.65 6.1 3.65 H2.2 Q1.5 3.65 1.2 3.1 Z" fill="#0a5eb0"/></svg>
<div class="t" style="left:184.00px;top:214.00px;font-size:5.9px;color:#0a5eb0;font-weight:normal;">0.0.0.1</div>
<svg style="left:206.20px;top:213.60px" width="9" height="4" viewBox="0 0 9 4"><path d="M0.1 2 L1.2 0.9 Q1.5 0.35 2.2 0.35 H6.1 Q6.8 0.35 7.1 0.9 L8.2 2 L7.1 3.1 Q6.8 3.65 6.1 3.65 H2.2 Q1.5 3.65 1.2 3.1 Z" fill="#e8b10c"/></svg>
<div class="t" style="left:216.90px;top:214.00px;font-size:5.9px;color:#e8b10c;font-weight:normal;">0.0.0.14</div>
<svg style="left:242.00px;top:213.60px" width="9" height="4" viewBox="0 0 9 4"><path d="M0.1 2 L1.2 0.9 Q1.5 0.35 2.2 0.35 H6.1 Q6.8 0.35 7.1 0.9 L8.2 2 L7.1 3.1 Q6.8 3.65 6.1 3.65 H2.2 Q1.5 3.65 1.2 3.1 Z" fill="#1b9ad9"/></svg>
<div class="t" style="left:252.40px;top:214.00px;font-size:5.9px;color:#1b9ad9;font-weight:normal;">0.0.0.5</div>
<svg style="left:274.70px;top:213.60px" width="9" height="4" viewBox="0 0 9 4"><path d="M0.1 2 L1.2 0.9 Q1.5 0.35 2.2 0.35 H6.1 Q6.8 0.35 7.1 0.9 L8.2 2 L7.1 3.1 Q6.8 3.65 6.1 3.65 H2.2 Q1.5 3.65 1.2 3.1 Z" fill="#2e8a2e"/></svg>
<div class="t" style="left:285.10px;top:214.00px;font-size:5.9px;color:#2e8a2e;font-weight:normal;">0.0.0.15</div>
<svg style="left:173.60px;top:224.40px" width="9" height="4" viewBox="0 0 9 4"><path d="M0.1 2 L1.2 0.9 Q1.5 0.35 2.2 0.35 H6.1 Q6.8 0.35 7.1 0.9 L8.2 2 L7.1 3.1 Q6.8 3.65 6.1 3.65 H2.2 Q1.5 3.65 1.2 3.1 Z" fill="#a8d0e8"/></svg>
<div class="t" style="left:184.00px;top:225.00px;font-size:5.9px;color:#a8d0e8;font-weight:normal;">0.0.0.26</div>
<svg style="left:214.80px;top:244.10px" width="59.4" height="59.4" viewBox="-29.7 -29.7 59.4 59.4"><path d="M0 0 L-28.082 -9.669 A29.7 29.7 0 0 1 28.082 9.669 Z" fill="#0a5eb0" stroke="#0a5eb0" stroke-width="0.2"/><path d="M0 0 L28.082 9.669 A29.7 29.7 0 0 1 3.856 29.449 Z" fill="#e8b10c" stroke="#e8b10c" stroke-width="0.2"/><path d="M0 0 L3.856 29.449 A29.7 29.7 0 0 1 -21.182 20.818 Z" fill="#1b9ad9" stroke="#1b9ad9" stroke-width="0.2"/><path d="M0 0 L-21.182 20.818 A29.7 29.7 0 0 1 -28.967 6.556 Z" fill="#2e8a2e" stroke="#2e8a2e" stroke-width="0.2"/><path d="M0 0 L-28.967 6.556 A29.7 29.7 0 0 1 -28.082 -9.669 Z" fill="#a8d0e8" stroke="#a8d0e8" stroke-width="0.2"/></svg>
<div class="t" style="left:50.20px;width:400px;text-align:center;top:255.00px;font-size:5.6px;color:#f4f8fb;font-weight:bold;">50%</div>
<div class="t" style="left:56.00px;width:400px;text-align:center;top:287.00px;font-size:5.6px;color:#f4f8fb;font-weight:bold;">17.65%</div>
<div class="t" style="left:37.30px;width:400px;text-align:center;top:290.00px;font-size:5.6px;color:#f4f8fb;font-weight:bold;">14.71%</div>
<div class="r" style="left:8.00px;top:316.70px;width:952.00px;height:18.90px;background:#b0d9ee;"></div>
<div class="r" style="left:8.00px;top:335.60px;width:952.00px;height:99.20px;background:#ddecf2;box-shadow:0 0.9px 0.9px rgba(70,120,150,0.22), inset 0 -0.8px 0 rgba(245,252,255,0.55), inset 0.8px 0 0 rgba(245,252,255,0.45)"></div>
<svg style="left:13.90px;top:321.60px" width="8" height="9" viewBox="0 0 8 9"><path d="M0.5 0.5 L7.2 4.1 L0.5 7.7 Z" fill="#ec6a1c" stroke="#ec6a1c" stroke-width="0.8" stroke-linejoin="round"/></svg>
<div class="t" style="left:27.80px;top:322.00px;font-size:7.5px;color:#27384a;font-weight:normal;-webkit-text-stroke:0.18px #27384a">Routers</div>
<svg style="left:927.00px;top:322.00px" width="8" height="8" viewBox="0 0 8 8"><rect x="0.5" y="1.3" width="7" height="6.2" rx="0.6" stroke="#8aa3b4" stroke-width="0.7" fill="none"/><path d="M0.5 2.9 H7.5 M2.2 0.3 V2 M5.8 0.3 V2" stroke="#8aa3b4" stroke-width="0.7"/><rect x="2.2" y="4.3" width="3.6" height="1.6" fill="#8aa3b4" opacity="0.35"/></svg>
<svg style="left:945.70px;top:321.80px" width="2" height="8" viewBox="0 0 2 8"><circle cx="1" cy="1" r="0.8" fill="#7d93a3"/><circle cx="1" cy="4" r="0.8" fill="#7d93a3"/><circle cx="1" cy="7" r="0.8" fill="#7d93a3"/></svg>
<div style="position:absolute;left:8.00px;top:335.60px;width:952.00px;height:99.20px;overflow:hidden"><div style="position:absolute;left:-8.00px;top:-335.60px;width:960px;height:540px">
<div class="t" style="left:14.60px;top:339.00px;font-size:5.2px;color:#5a646e;font-weight:bold;letter-spacing:0.12px">SEVERITY</div>
<div class="t" style="left:47.00px;top:339.00px;font-size:5.2px;color:#5a646e;font-weight:bold;letter-spacing:0.12px">HOST</div>
<div class="t" style="left:67.50px;top:339.00px;font-size:5.2px;color:#5a646e;font-weight:bold;letter-spacing:0.12px">MESSAGE</div>
<div class="t" style="left:217.70px;top:339.00px;font-size:5.2px;color:#5a646e;font-weight:bold;letter-spacing:0.12px">DEVICE-ROLE</div>
<div class="t" style="left:259.90px;top:339.00px;font-size:5.2px;color:#5a646e;font-weight:bold;letter-spacing:0.12px">DEVICEID</div>
<div class="t" style="left:291.00px;top:339.00px;font-size:5.2px;color:#5a646e;font-weight:bold;letter-spacing:0.12px">MNEMONIC</div>
<div class="t" style="left:344.60px;top:339.00px;font-size:5.2px;color:#5a646e;font-weight:bold;letter-spacing:0.12px">CONTACT</div>
<div class="t" style="left:379.00px;top:339.00px;font-size:5.2px;color:#5a646e;font-weight:bold;letter-spacing:0.12px">CONTACT-PHONE</div>
<div class="t" style="left:431.60px;top:339.00px;font-size:5.2px;color:#5a646e;font-weight:bold;letter-spacing:0.12px">LOCATION</div>
<div class="t" style="left:464.90px;top:339.00px;font-size:5.2px;color:#5a646e;font-weight:bold;letter-spacing:0.12px">CRITICALITY</div>
<div class="t" style="left:503.80px;top:339.00px;font-size:5.2px;color:#5a646e;font-weight:bold;letter-spacing:0.12px">DEVICE-TYPE</div>
<div class="t" style="left:545.20px;top:339.00px;font-size:5.2px;color:#5a646e;font-weight:bold;letter-spacing:0.12px">MANAGEMENT-IP</div>
<div class="t" style="left:596.80px;top:339.00px;font-size:5.2px;color:#5a646e;font-weight:bold;letter-spacing:0.12px">MODEL</div>
<div class="t" style="left:630.90px;top:339.00px;font-size:5.2px;color:#5a646e;font-weight:bold;letter-spacing:0.12px">SOFTWARE-VERSION</div>
<div class="t" style="left:692.20px;top:339.00px;font-size:5.2px;color:#5a646e;font-weight:bold;letter-spacing:0.12px">VRF</div>
<div class="t" style="left:708.60px;top:339.00px;font-size:5.2px;color:#5a646e;font-weight:bold;letter-spacing:0.12px">ZONE</div>
<div class="t" style="left:729.00px;top:339.00px;font-size:5.2px;color:#5a646e;font-weight:bold;letter-spacing:0.12px">BGP AREA</div>
<div class="t" style="left:761.80px;top:339.00px;font-size:5.2px;color:#5a646e;font-weight:bold;letter-spacing:0.12px">OSPF</div>
<div class="t" style="left:784.80px;top:339.00px;font-size:5.2px;color:#5a646e;font-weight:bold;letter-spacing:0.12px">SOURCE-INTERFACE</div>
<div class="t" style="left:844.00px;top:339.00px;font-size:5.2px;color:#5a646e;font-weight:bold;letter-spacing:0.12px">WAN-INTERFACE</div>
<div class="t" style="left:905.00px;top:339.00px;font-size:5.2px;color:#5a646e;font-weight:bold;letter-spacing:0.12px">LAST SEEN</div>
<div class="r" style="left:14.80px;top:354.00px;width:21.80px;height:7.20px;background:#52aa55;border-radius:1.2px"></div><div class="t" style="left:-174.30px;width:400px;text-align:center;top:356.00px;font-size:4.3px;color:#f4fbf4;font-weight:bold;letter-spacing:0.05px">NOTICE</div>
<div class="t" style="left:47.00px;top:355.00px;font-size:5.9px;color:#606b76;font-weight:normal;letter-spacing:0.08px">R25</div>
<div class="t" style="left:217.70px;top:355.00px;font-size:5.9px;color:#606b76;font-weight:normal;letter-spacing:0.08px">Branch</div>
<div class="t" style="left:259.90px;top:355.00px;font-size:5.9px;color:#606b76;font-weight:normal;letter-spacing:0.08px">102966</div>
<div class="t" style="left:291.00px;top:352.00px;font-size:5.9px;color:#606b76;font-weight:normal;letter-spacing:0.08px">BGP-5-</div>
<div class="t" style="left:291.00px;top:359.00px;font-size:5.9px;color:#606b76;font-weight:normal;letter-spacing:0.08px">ADJCHANGE</div>
<div class="t" style="left:344.60px;top:352.00px;font-size:5.9px;color:#606b76;font-weight:normal;letter-spacing:0.08px">Captain</div>
<div class="t" style="left:344.60px;top:359.00px;font-size:5.9px;color:#606b76;font-weight:normal;letter-spacing:0.08px">America</div>
<div class="t" style="left:379.00px;top:355.00px;font-size:5.9px;color:#606b76;font-weight:normal;letter-spacing:0.08px">202-555-0134</div>
<div class="t" style="left:431.60px;top:355.00px;font-size:5.9px;color:#606b76;font-weight:normal;letter-spacing:0.08px">APAC</div>
<div class="t" style="left:464.90px;top:355.00px;font-size:5.9px;color:#606b76;font-weight:normal;letter-spacing:0.08px">Medium</div>
<div class="t" style="left:503.80px;top:355.00px;font-size:5.9px;color:#606b76;font-weight:normal;letter-spacing:0.08px">Router</div>
<div class="t" style="left:545.20px;top:355.00px;font-size:5.9px;color:#606b76;font-weight:normal;letter-spacing:0.08px">10.6.10.25</div>
<div class="t" style="left:596.80px;top:355.00px;font-size:5.9px;color:#606b76;font-weight:normal;letter-spacing:0.08px">CSR1000V</div>
<div class="t" style="left:630.90px;top:355.00px;font-size:5.9px;color:#606b76;font-weight:normal;letter-spacing:0.08px">IOS-XE 16.9.4</div>
<div class="t" style="left:692.20px;top:355.00px;font-size:5.9px;color:#606b76;font-weight:normal;letter-spacing:0.08px">in</div>
<div class="t" style="left:708.60px;top:355.00px;font-size:5.9px;color:#606b76;font-weight:normal;letter-spacing:0.08px">Core</div>
<div class="t" style="left:729.00px;top:355.00px;font-size:5.9px;color:#606b76;font-weight:normal;letter-spacing:0.08px">65025</div>
<div class="t" style="left:761.80px;top:355.00px;font-size:5.9px;color:#606b76;font-weight:normal;letter-spacing:0.08px">0.0.0.1</div>
<div class="t" style="left:784.80px;top:355.00px;font-size:5.9px;color:#606b76;font-weight:normal;letter-spacing:0.08px">Ethernet0/2.9</div>
<div class="t" style="left:844.00px;top:355.00px;font-size:5.9px;color:#606b76;font-weight:normal;letter-spacing:0.08px">GigabitEthernet1/0/3</div>
<div class="t" style="left:905.00px;top:352.00px;font-size:5.9px;color:#606b76;font-weight:normal;letter-spacing:0.08px">2025-09-17</div>
<div class="t" style="left:905.00px;top:359.00px;font-size:5.9px;color:#606b76;font-weight:normal;letter-spacing:0.08px">16:07:22.5420</div>
<div class="t" style="left:67.50px;top:352.00px;font-size:5.9px;color:#606b76;letter-spacing:0.08px"><span style="color:#8a949c;font-size:5px">%</span> <b style="color:#343a40;background:rgba(255,255,255,0.3);border-radius:1px;padding:0 0.8px">BGP-5-ADJCHANGE <span style="color:#9aa4ad;font-weight:normal">~</span></b> : neighbor <b style="color:#343a40;background:rgba(255,255,255,0.3);border-radius:1px;padding:0 0.8px">10.40.11.1 <span style="color:#9aa4ad;font-weight:normal">~</span></b> v</div>
<div class="t" style="left:67.50px;top:359.00px;font-size:5.9px;color:#606b76;letter-spacing:0.08px">pn vrf bs Down BGP Notification sent</div>
<div class="r" style="left:14.80px;top:378.10px;width:21.80px;height:7.20px;background:#52aa55;border-radius:1.2px"></div><div class="t" style="left:-174.30px;width:400px;text-align:center;top:380.00px;font-size:4.3px;color:#f4fbf4;font-weight:bold;letter-spacing:0.05px">NOTICE</div>
<div class="t" style="left:47.00px;top:380.00px;font-size:5.9px;color:#606b76;font-weight:normal;letter-spacing:0.08px">R25</div>
<div class="t" style="left:217.70px;top:380.00px;font-size:5.9px;color:#606b76;font-weight:normal;letter-spacing:0.08px">Branch</div>
<div class="t" style="left:259.90px;top:380.00px;font-size:5.9px;color:#606b76;font-weight:normal;letter-spacing:0.08px">102966</div>
<div class="t" style="left:291.00px;top:376.00px;font-size:5.9px;color:#606b76;font-weight:normal;letter-spacing:0.08px">BGP_SESSION-5-</div>
<div class="t" style="left:291.00px;top:383.00px;font-size:5.9px;color:#606b76;font-weight:normal;letter-spacing:0.08px">ADJCHANGE</div>
<div class="t" style="left:344.60px;top:376.00px;font-size:5.9px;color:#606b76;font-weight:normal;letter-spacing:0.08px">Captain</div>
<div class="t" style="left:344.60px;top:383.00px;font-size:5.9px;color:#606b76;font-weight:normal;letter-spacing:0.08px">America</div>
<div class="t" style="left:379.00px;top:380.00px;font-size:5.9px;color:#606b76;font-weight:normal;letter-spacing:0.08px">202-555-0134</div>
<div class="t" style="left:431.60px;top:380.00px;font-size:5.9px;color:#606b76;font-weight:normal;letter-spacing:0.08px">APAC</div>
<div class="t" style="left:464.90px;top:380.00px;font-size:5.9px;color:#606b76;font-weight:normal;letter-spacing:0.08px">Medium</div>
<div class="t" style="left:503.80px;top:380.00px;font-size:5.9px;color:#606b76;font-weight:normal;letter-spacing:0.08px">Router</div>
<div class="t" style="left:545.20px;top:380.00px;font-size:5.9px;color:#606b76;font-weight:normal;letter-spacing:0.08px">10.6.10.25</div>
<div class="t" style="left:596.80px;top:380.00px;font-size:5.9px;color:#606b76;font-weight:normal;letter-spacing:0.08px">CSR1000V</div>
<div class="t" style="left:630.90px;top:380.00px;font-size:5.9px;color:#606b76;font-weight:normal;letter-spacing:0.08px">IOS-XE 16.9.4</div>
<div class="t" style="left:692.20px;top:380.00px;font-size:5.9px;color:#606b76;font-weight:normal;letter-spacing:0.08px">in</div>
<div class="t" style="left:708.60px;top:380.00px;font-size:5.9px;color:#606b76;font-weight:normal;letter-spacing:0.08px">Core</div>
<div class="t" style="left:729.00px;top:380.00px;font-size:5.9px;color:#606b76;font-weight:normal;letter-spacing:0.08px">65025</div>
<div class="t" style="left:761.80px;top:380.00px;font-size:5.9px;color:#606b76;font-weight:normal;letter-spacing:0.08px">0.0.0.1</div>
<div class="t" style="left:784.80px;top:380.00px;font-size:5.9px;color:#606b76;font-weight:normal;letter-spacing:0.08px">Ethernet0/2.9</div>
<div class="t" style="left:844.00px;top:380.00px;font-size:5.9px;color:#606b76;font-weight:normal;letter-spacing:0.08px">GigabitEthernet1/0/3</div>
<div class="t" style="left:905.00px;top:376.00px;font-size:5.9px;color:#606b76;font-weight:normal;letter-spacing:0.08px">2025-09-17</div>
<div class="t" style="left:905.00px;top:383.00px;font-size:5.9px;color:#606b76;font-weight:normal;letter-spacing:0.08px">16:07:22.5490</div>
<div class="t" style="left:67.50px;top:371.00px;font-size:5.9px;color:#606b76;letter-spacing:0.08px"><span style="color:#8a949c;font-size:5px">%</span> <b style="color:#343a40;background:rgba(255,255,255,0.3);border-radius:1px;padding:0 0.8px">BGP_SESSION-5-ADJCHANGE <span style="color:#9aa4ad;font-weight:normal">~</span></b> : neighbor</div>
<div class="t" style="left:67.50px;top:380.00px;font-size:5.9px;color:#606b76;letter-spacing:0.08px">&nbsp;<b style="color:#343a40;background:rgba(255,255,255,0.3);border-radius:1px;padding:0 0.8px">10.40.11.1 <span style="color:#9aa4ad;font-weight:normal">~</span></b> IPv4 Unicast vpn vrf bs topology base r</div>
<div class="t" style="left:67.50px;top:388.00px;font-size:5.9px;color:#606b76;letter-spacing:0.08px">emoved from session BGP Notification sent</div>
<div class="r" style="left:14.80px;top:402.10px;width:21.80px;height:7.20px;background:#52aa55;border-radius:1.2px"></div><div class="t" style="left:-174.30px;width:400px;text-align:center;top:404.00px;font-size:4.3px;color:#f4fbf4;font-weight:bold;letter-spacing:0.05px">NOTICE</div>
<div class="t" style="left:47.00px;top:404.00px;font-size:5.9px;color:#606b76;font-weight:normal;letter-spacing:0.08px">R25</div>
<div class="t" style="left:217.70px;top:404.00px;font-size:5.9px;color:#606b76;font-weight:normal;letter-spacing:0.08px">Branch</div>
<div class="t" style="left:259.90px;top:404.00px;font-size:5.9px;color:#606b76;font-weight:normal;letter-spacing:0.08px">102966</div>
<div class="t" style="left:291.00px;top:400.00px;font-size:5.9px;color:#606b76;font-weight:normal;letter-spacing:0.08px">BGP-5-</div>
<div class="t" style="left:291.00px;top:407.00px;font-size:5.9px;color:#606b76;font-weight:normal;letter-spacing:0.08px">NBR_RESET</div>
<div class="t" style="left:344.60px;top:400.00px;font-size:5.9px;color:#606b76;font-weight:normal;letter-spacing:0.08px">Captain</div>
<div class="t" style="left:344.60px;top:407.00px;font-size:5.9px;color:#606b76;font-weight:normal;letter-spacing:0.08px">America</div>
<div class="t" style="left:379.00px;top:404.00px;font-size:5.9px;color:#606b76;font-weight:normal;letter-spacing:0.08px">202-555-0134</div>
<div class="t" style="left:431.60px;top:404.00px;font-size:5.9px;color:#606b76;font-weight:normal;letter-spacing:0.08px">APAC</div>
<div class="t" style="left:464.90px;top:404.00px;font-size:5.9px;color:#606b76;font-weight:normal;letter-spacing:0.08px">Medium</div>
<div class="t" style="left:503.80px;top:404.00px;font-size:5.9px;color:#606b76;font-weight:normal;letter-spacing:0.08px">Router</div>
<div class="t" style="left:545.20px;top:404.00px;font-size:5.9px;color:#606b76;font-weight:normal;letter-spacing:0.08px">10.6.10.25</div>
<div class="t" style="left:596.80px;top:404.00px;font-size:5.9px;color:#606b76;font-weight:normal;letter-spacing:0.08px">CSR1000V</div>
<div class="t" style="left:630.90px;top:404.00px;font-size:5.9px;color:#606b76;font-weight:normal;letter-spacing:0.08px">IOS-XE 16.9.4</div>
<div class="t" style="left:692.20px;top:404.00px;font-size:5.9px;color:#606b76;font-weight:normal;letter-spacing:0.08px">in</div>
<div class="t" style="left:708.60px;top:404.00px;font-size:5.9px;color:#606b76;font-weight:normal;letter-spacing:0.08px">Core</div>
<div class="t" style="left:729.00px;top:404.00px;font-size:5.9px;color:#606b76;font-weight:normal;letter-spacing:0.08px">65025</div>
<div class="t" style="left:761.80px;top:404.00px;font-size:5.9px;color:#606b76;font-weight:normal;letter-spacing:0.08px">0.0.0.1</div>
<div class="t" style="left:784.80px;top:404.00px;font-size:5.9px;color:#606b76;font-weight:normal;letter-spacing:0.08px">Ethernet0/2.9</div>
<div class="t" style="left:844.00px;top:404.00px;font-size:5.9px;color:#606b76;font-weight:normal;letter-spacing:0.08px">GigabitEthernet1/0/3</div>
<div class="t" style="left:905.00px;top:400.00px;font-size:5.9px;color:#606b76;font-weight:normal;letter-spacing:0.08px">2025-09-17</div>
<div class="t" style="left:905.00px;top:407.00px;font-size:5.9px;color:#606b76;font-weight:normal;letter-spacing:0.08px">16:07:22.5490</div>
<div class="t" style="left:67.50px;top:400.00px;font-size:5.9px;color:#606b76;letter-spacing:0.08px"><span style="color:#8a949c;font-size:5px">%</span> <b style="color:#343a40;background:rgba(255,255,255,0.3);border-radius:1px;padding:0 0.8px">BGP-5-NBR_RESET <span style="color:#9aa4ad;font-weight:normal">~</span></b> : Neighbor <b style="color:#343a40;background:rgba(255,255,255,0.3);border-radius:1px;padding:0 0.8px">10.40.11.1 <span style="color:#9aa4ad;font-weight:normal">~</span></b> re</div>
<div class="t" style="left:67.50px;top:407.00px;font-size:5.9px;color:#606b76;letter-spacing:0.08px">set (BGP Notification sent)</div>
<div class="r" style="left:14.80px;top:422.50px;width:21.80px;height:7.20px;background:#c62f3a;border-radius:1.2px"></div><div class="t" style="left:-174.30px;width:400px;text-align:center;top:425.00px;font-size:4.3px;color:#f4fbf4;font-weight:bold;letter-spacing:0.05px">ERROR</div>
<div class="t" style="left:47.00px;top:424.00px;font-size:5.9px;color:#606b76;font-weight:normal;letter-spacing:0.08px">R25</div>
<div class="t" style="left:217.70px;top:424.00px;font-size:5.9px;color:#606b76;font-weight:normal;letter-spacing:0.08px">Branch</div>
<div class="t" style="left:259.90px;top:424.00px;font-size:5.9px;color:#606b76;font-weight:normal;letter-spacing:0.08px">102966</div>
<div class="t" style="left:291.00px;top:420.00px;font-size:5.9px;color:#606b76;font-weight:normal;letter-spacing:0.08px">BGP-3-</div>
<div class="t" style="left:291.00px;top:428.00px;font-size:5.9px;color:#606b76;font-weight:normal;letter-spacing:0.08px">NOTIFICATION</div>
<div class="t" style="left:344.60px;top:420.00px;font-size:5.9px;color:#606b76;font-weight:normal;letter-spacing:0.08px">Captain</div>
<div class="t" style="left:344.60px;top:428.00px;font-size:5.9px;color:#606b76;font-weight:normal;letter-spacing:0.08px">America</div>
<div class="t" style="left:379.00px;top:424.00px;font-size:5.9px;color:#606b76;font-weight:normal;letter-spacing:0.08px">202-555-0134</div>
<div class="t" style="left:431.60px;top:424.00px;font-size:5.9px;color:#606b76;font-weight:normal;letter-spacing:0.08px">APAC</div>
<div class="t" style="left:464.90px;top:424.00px;font-size:5.9px;color:#606b76;font-weight:normal;letter-spacing:0.08px">Medium</div>
<div class="t" style="left:503.80px;top:424.00px;font-size:5.9px;color:#606b76;font-weight:normal;letter-spacing:0.08px">Router</div>
<div class="t" style="left:545.20px;top:424.00px;font-size:5.9px;color:#606b76;font-weight:normal;letter-spacing:0.08px">10.6.10.25</div>
<div class="t" style="left:596.80px;top:424.00px;font-size:5.9px;color:#606b76;font-weight:normal;letter-spacing:0.08px">CSR1000V</div>
<div class="t" style="left:630.90px;top:424.00px;font-size:5.9px;color:#606b76;font-weight:normal;letter-spacing:0.08px">IOS-XE 16.9.4</div>
<div class="t" style="left:692.20px;top:424.00px;font-size:5.9px;color:#606b76;font-weight:normal;letter-spacing:0.08px">in</div>
<div class="t" style="left:708.60px;top:424.00px;font-size:5.9px;color:#606b76;font-weight:normal;letter-spacing:0.08px">Core</div>
<div class="t" style="left:729.00px;top:424.00px;font-size:5.9px;color:#606b76;font-weight:normal;letter-spacing:0.08px">65025</div>
<div class="t" style="left:761.80px;top:424.00px;font-size:5.9px;color:#606b76;font-weight:normal;letter-spacing:0.08px">0.0.0.1</div>
<div class="t" style="left:784.80px;top:424.00px;font-size:5.9px;color:#606b76;font-weight:normal;letter-spacing:0.08px">Ethernet0/2.9</div>
<div class="t" style="left:844.00px;top:424.00px;font-size:5.9px;color:#606b76;font-weight:normal;letter-spacing:0.08px">GigabitEthernet1/0/3</div>
<div class="t" style="left:905.00px;top:420.00px;font-size:5.9px;color:#606b76;font-weight:normal;letter-spacing:0.08px">2025-09-17</div>
<div class="t" style="left:905.00px;top:428.00px;font-size:5.9px;color:#606b76;font-weight:normal;letter-spacing:0.08px">16:07:21.5980</div>
<div class="t" style="left:67.50px;top:420.00px;font-size:5.9px;color:#606b76;letter-spacing:0.08px"><span style="color:#8a949c;font-size:5px">%</span> <b style="color:#343a40;background:rgba(255,255,255,0.3);border-radius:1px;padding:0 0.8px">BGP-3-NOTIFICATION <span style="color:#9aa4ad;font-weight:normal">~</span></b> : sent to neighbor</div>
<div class="t" style="left:67.50px;top:428.00px;font-size:5.9px;color:#606b76;letter-spacing:0.08px">&nbsp;<b style="color:#343a40;background:rgba(255,255,255,0.3);border-radius:1px;padding:0 0.8px">10.40.11.1 <span style="color:#9aa4ad;font-weight:normal">~</span></b> 4/0 (hold time expired) 0 bytes</div>
</div></div>
<div class="r" style="left:957.00px;top:336.90px;width:1.60px;height:55.70px;background:#b9c3ca;border-radius:1px"></div>
<div class="r" style="left:8.00px;top:442.70px;width:952.00px;height:19.00px;background:#b0d9ee;"></div>
<div class="r" style="left:8.00px;top:461.70px;width:952.00px;height:98.30px;background:#ddecf2;box-shadow:0 0.9px 0.9px rgba(70,120,150,0.22), inset 0 -0.8px 0 rgba(245,252,255,0.55), inset 0.8px 0 0 rgba(245,252,255,0.45)"></div>
<svg style="left:13.90px;top:447.70px" width="8" height="9" viewBox="0 0 8 9"><path d="M0.5 0.5 L7.2 4.1 L0.5 7.7 Z" fill="#ec6a1c" stroke="#ec6a1c" stroke-width="0.8" stroke-linejoin="round"/></svg>
<div class="t" style="left:27.80px;top:448.00px;font-size:7.5px;color:#27384a;font-weight:normal;-webkit-text-stroke:0.18px #27384a">Switches</div>
<svg style="left:927.00px;top:448.10px" width="8" height="8" viewBox="0 0 8 8"><rect x="0.5" y="1.3" width="7" height="6.2" rx="0.6" stroke="#8aa3b4" stroke-width="0.7" fill="none"/><path d="M0.5 2.9 H7.5 M2.2 0.3 V2 M5.8 0.3 V2" stroke="#8aa3b4" stroke-width="0.7"/><rect x="2.2" y="4.3" width="3.6" height="1.6" fill="#8aa3b4" opacity="0.35"/></svg>
<svg style="left:945.70px;top:447.90px" width="2" height="8" viewBox="0 0 2 8"><circle cx="1" cy="1" r="0.8" fill="#7d93a3"/><circle cx="1" cy="4" r="0.8" fill="#7d93a3"/><circle cx="1" cy="7" r="0.8" fill="#7d93a3"/></svg>
<div style="position:absolute;left:8.00px;top:461.70px;width:952.00px;height:98.30px;overflow:hidden"><div style="position:absolute;left:-8.00px;top:-461.70px;width:960px;height:540px">
<div class="t" style="left:14.90px;top:466.00px;font-size:5.2px;color:#5a646e;font-weight:bold;letter-spacing:0.12px">SEVERITY</div>
<div class="t" style="left:46.60px;top:466.00px;font-size:5.2px;color:#5a646e;font-weight:bold;letter-spacing:0.12px">HOST</div>
<div class="t" style="left:68.50px;top:466.00px;font-size:5.2px;color:#5a646e;font-weight:bold;letter-spacing:0.12px">MESSAGE</div>
<div class="t" style="left:212.70px;top:466.00px;font-size:5.2px;color:#5a646e;font-weight:bold;letter-spacing:0.12px">DEVICE-ROLE</div>
<div class="t" style="left:256.50px;top:466.00px;font-size:5.2px;color:#5a646e;font-weight:bold;letter-spacing:0.12px">DEVICEID</div>
<div class="t" style="left:287.10px;top:466.00px;font-size:5.2px;color:#5a646e;font-weight:bold;letter-spacing:0.12px">MNEMONIC</div>
<div class="t" style="left:338.30px;top:466.00px;font-size:5.2px;color:#5a646e;font-weight:bold;letter-spacing:0.12px">CONTACT</div>
<div class="t" style="left:372.90px;top:466.00px;font-size:5.2px;color:#5a646e;font-weight:bold;letter-spacing:0.12px">CONTACT-PHONE</div>
<div class="t" style="left:424.70px;top:466.00px;font-size:5.2px;color:#5a646e;font-weight:bold;letter-spacing:0.12px">LOCATION</div>
<div class="t" style="left:458.60px;top:466.00px;font-size:5.2px;color:#5a646e;font-weight:bold;letter-spacing:0.12px">CRITICALITY</div>
<div class="t" style="left:497.80px;top:466.00px;font-size:5.2px;color:#5a646e;font-weight:bold;letter-spacing:0.12px">DEVICE-TYPE</div>
<div class="t" style="left:539.40px;top:466.00px;font-size:5.2px;color:#5a646e;font-weight:bold;letter-spacing:0.12px">MANAGEMENT-IP</div>
<div class="t" style="left:590.80px;top:466.00px;font-size:5.2px;color:#5a646e;font-weight:bold;letter-spacing:0.12px">MODEL</div>
<div class="t" style="left:621.90px;top:466.00px;font-size:5.2px;color:#5a646e;font-weight:bold;letter-spacing:0.12px">SOFTWARE-VERSION</div>
<div class="t" style="left:683.20px;top:466.00px;font-size:5.2px;color:#5a646e;font-weight:bold;letter-spacing:0.12px">ZONE</div>
<div class="t" style="left:719.90px;top:466.00px;font-size:5.2px;color:#5a646e;font-weight:bold;letter-spacing:0.12px">MANAGEMENT-VLAN</div>
<div class="t" style="left:781.00px;top:466.00px;font-size:5.2px;color:#5a646e;font-weight:bold;letter-spacing:0.12px">OOB-MANAGEMENT</div>
<div class="t" style="left:839.10px;top:466.00px;font-size:5.2px;color:#5a646e;font-weight:bold;letter-spacing:0.12px">UPLINK-INTERFACE</div>
<div class="t" style="left:899.10px;top:466.00px;font-size:5.2px;color:#5a646e;font-weight:bold;letter-spacing:0.12px">LAST SEEN</div>
<div class="r" style="left:15.10px;top:479.40px;width:21.80px;height:7.20px;background:#c62f3a;border-radius:1.2px"></div><div class="t" style="left:-174.00px;width:400px;text-align:center;top:481.00px;font-size:4.3px;color:#f4fbf4;font-weight:bold;letter-spacing:0.05px">ERROR</div>
<div class="t" style="left:46.60px;top:481.00px;font-size:5.9px;color:#606b76;font-weight:normal;letter-spacing:0.08px">SW30</div>
<div class="t" style="left:212.70px;top:481.00px;font-size:5.9px;color:#606b76;font-weight:normal;letter-spacing:0.08px">Access</div>
<div class="t" style="left:256.50px;top:481.00px;font-size:5.9px;color:#606b76;font-weight:normal;letter-spacing:0.08px">300030</div>
<div class="t" style="left:287.10px;top:477.00px;font-size:5.9px;color:#606b76;font-weight:normal;letter-spacing:0.08px">LINK-3-</div>
<div class="t" style="left:287.10px;top:485.00px;font-size:5.9px;color:#606b76;font-weight:normal;letter-spacing:0.08px">UPDOWN</div>
<div class="t" style="left:338.30px;top:477.00px;font-size:5.9px;color:#606b76;font-weight:normal;letter-spacing:0.08px">Peter</div>
<div class="t" style="left:338.30px;top:485.00px;font-size:5.9px;color:#606b76;font-weight:normal;letter-spacing:0.08px">Parker</div>
<div class="t" style="left:372.90px;top:481.00px;font-size:5.9px;color:#606b76;font-weight:normal;letter-spacing:0.08px">202-555-0030</div>
<div class="t" style="left:424.70px;top:477.00px;font-size:5.9px;color:#606b76;font-weight:normal;letter-spacing:0.08px">Building-</div>
<div class="t" style="left:424.70px;top:485.00px;font-size:5.9px;color:#606b76;font-weight:normal;letter-spacing:0.08px">B</div>
<div class="t" style="left:458.60px;top:481.00px;font-size:5.9px;color:#606b76;font-weight:normal;letter-spacing:0.08px">Low</div>
<div class="t" style="left:497.80px;top:481.00px;font-size:5.9px;color:#606b76;font-weight:normal;letter-spacing:0.08px">Switch</div>
<div class="t" style="left:539.40px;top:481.00px;font-size:5.9px;color:#606b76;font-weight:normal;letter-spacing:0.08px">192.168.5.30</div>
<div class="t" style="left:590.80px;top:481.00px;font-size:5.9px;color:#606b76;font-weight:normal;letter-spacing:0.08px">vIOS L2</div>
<div class="t" style="left:621.90px;top:481.00px;font-size:5.9px;color:#606b76;font-weight:normal;letter-spacing:0.08px">IOS 15.2</div>
<div class="t" style="left:683.20px;top:481.00px;font-size:5.9px;color:#606b76;font-weight:normal;letter-spacing:0.08px">Core</div>
<div class="t" style="left:719.90px;top:481.00px;font-size:5.9px;color:#606b76;font-weight:normal;letter-spacing:0.08px">10</div>
<div class="t" style="left:781.00px;top:481.00px;font-size:5.9px;color:#606b76;font-weight:normal;letter-spacing:0.08px">Yes</div>
<div class="t" style="left:839.10px;top:481.00px;font-size:5.9px;color:#606b76;font-weight:normal;letter-spacing:0.08px">GigabitEthernet1/0/1</div>
<div class="t" style="left:899.10px;top:477.00px;font-size:5.9px;color:#606b76;font-weight:normal;letter-spacing:0.08px">2025-09-17</div>
<div class="t" style="left:899.10px;top:485.00px;font-size:5.9px;color:#606b76;font-weight:normal;letter-spacing:0.08px">16:04:55.7530</div>
<div class="t" style="left:68.50px;top:478.00px;font-size:5.9px;color:#606b76;letter-spacing:0.08px"><span style="color:#8a949c;font-size:5px">%</span> <b style="color:#343a40;background:rgba(255,255,255,0.3);border-radius:1px;padding:0 0.8px">LINK-3-UPDOWN <span style="color:#9aa4ad;font-weight:normal">~</span></b> : Interface Ethernet1/2, chan</div>
<div class="t" style="left:68.50px;top:486.00px;font-size:5.9px;color:#606b76;letter-spacing:0.08px">ged state to up</div>
<div class="r" style="left:15.10px;top:500.20px;width:21.80px;height:7.20px;background:#52aa55;border-radius:1.2px"></div><div class="t" style="left:-174.00px;width:400px;text-align:center;top:502.00px;font-size:4.3px;color:#f4fbf4;font-weight:bold;letter-spacing:0.05px">NOTICE</div>
<div class="t" style="left:46.60px;top:502.00px;font-size:5.9px;color:#606b76;font-weight:normal;letter-spacing:0.08px">SW30</div>
<div class="t" style="left:212.70px;top:502.00px;font-size:5.9px;color:#606b76;font-weight:normal;letter-spacing:0.08px">Access</div>
<div class="t" style="left:256.50px;top:502.00px;font-size:5.9px;color:#606b76;font-weight:normal;letter-spacing:0.08px">300030</div>
<div class="t" style="left:287.10px;top:498.00px;font-size:5.9px;color:#606b76;font-weight:normal;letter-spacing:0.08px">LINEPROTO-5-</div>
<div class="t" style="left:287.10px;top:505.00px;font-size:5.9px;color:#606b76;font-weight:normal;letter-spacing:0.08px">UPDOWN</div>
<div class="t" style="left:338.30px;top:498.00px;font-size:5.9px;color:#606b76;font-weight:normal;letter-spacing:0.08px">Peter</div>
<div class="t" style="left:338.30px;top:505.00px;font-size:5.9px;color:#606b76;font-weight:normal;letter-spacing:0.08px">Parker</div>
<div class="t" style="left:372.90px;top:502.00px;font-size:5.9px;color:#606b76;font-weight:normal;letter-spacing:0.08px">202-555-0030</div>
<div class="t" style="left:424.70px;top:498.00px;font-size:5.9px;color:#606b76;font-weight:normal;letter-spacing:0.08px">Building-</div>
<div class="t" style="left:424.70px;top:505.00px;font-size:5.9px;color:#606b76;font-weight:normal;letter-spacing:0.08px">B</div>
<div class="t" style="left:458.60px;top:502.00px;font-size:5.9px;color:#606b76;font-weight:normal;letter-spacing:0.08px">Low</div>
<div class="t" style="left:497.80px;top:502.00px;font-size:5.9px;color:#606b76;font-weight:normal;letter-spacing:0.08px">Switch</div>
<div class="t" style="left:539.40px;top:502.00px;font-size:5.9px;color:#606b76;font-weight:normal;letter-spacing:0.08px">192.168.5.30</div>
<div class="t" style="left:590.80px;top:502.00px;font-size:5.9px;color:#606b76;font-weight:normal;letter-spacing:0.08px">vIOS L2</div>
<div class="t" style="left:621.90px;top:502.00px;font-size:5.9px;color:#606b76;font-weight:normal;letter-spacing:0.08px">IOS 15.2</div>
<div class="t" style="left:683.20px;top:502.00px;font-size:5.9px;color:#606b76;font-weight:normal;letter-spacing:0.08px">Core</div>
<div class="t" style="left:719.90px;top:502.00px;font-size:5.9px;color:#606b76;font-weight:normal;letter-spacing:0.08px">10</div>
<div class="t" style="left:781.00px;top:502.00px;font-size:5.9px;color:#606b76;font-weight:normal;letter-spacing:0.08px">Yes</div>
<div class="t" style="left:839.10px;top:502.00px;font-size:5.9px;color:#606b76;font-weight:normal;letter-spacing:0.08px">GigabitEthernet1/0/1</div>
<div class="t" style="left:899.10px;top:498.00px;font-size:5.9px;color:#606b76;font-weight:normal;letter-spacing:0.08px">2025-09-17</div>
<div class="t" style="left:899.10px;top:505.00px;font-size:5.9px;color:#606b76;font-weight:normal;letter-spacing:0.08px">16:04:55.7530</div>
<div class="t" style="left:68.50px;top:498.00px;font-size:5.9px;color:#606b76;letter-spacing:0.08px"><span style="color:#8a949c;font-size:5px">%</span> <b style="color:#343a40;background:rgba(255,255,255,0.3);border-radius:1px;padding:0 0.8px">LINEPROTO-5-UPDOWN <span style="color:#9aa4ad;font-weight:normal">~</span></b> : Line protocol on Int</div>
<div class="t" style="left:68.50px;top:506.00px;font-size:5.9px;color:#606b76;letter-spacing:0.08px">erface Ethernet1/2, changed state to up</div>
<div class="r" style="left:15.10px;top:519.90px;width:21.80px;height:7.20px;background:#52aa55;border-radius:1.2px"></div><div class="t" style="left:-174.00px;width:400px;text-align:center;top:522.00px;font-size:4.3px;color:#f4fbf4;font-weight:bold;letter-spacing:0.05px">NOTICE</div>
<div class="t" style="left:46.60px;top:521.00px;font-size:5.9px;color:#606b76;font-weight:normal;letter-spacing:0.08px">SW28</div>
<div class="t" style="left:212.70px;top:521.00px;font-size:5.9px;color:#606b76;font-weight:normal;letter-spacing:0.08px">Distribution</div>
<div class="t" style="left:256.50px;top:521.00px;font-size:5.9px;color:#606b76;font-weight:normal;letter-spacing:0.08px">300028</div>
<div class="t" style="left:287.10px;top:517.00px;font-size:5.9px;color:#606b76;font-weight:normal;letter-spacing:0.08px">LINEPROTO-5-</div>
<div class="t" style="left:287.10px;top:525.00px;font-size:5.9px;color:#606b76;font-weight:normal;letter-spacing:0.08px">UPDOWN</div>
<div class="t" style="left:338.30px;top:521.00px;font-size:5.9px;color:#606b76;font-weight:normal;letter-spacing:0.08px">Hank Pym</div>
<div class="t" style="left:372.90px;top:521.00px;font-size:5.9px;color:#606b76;font-weight:normal;letter-spacing:0.08px">202-555-0028</div>
<div class="t" style="left:424.70px;top:517.00px;font-size:5.9px;color:#606b76;font-weight:normal;letter-spacing:0.08px">Building-</div>
<div class="t" style="left:424.70px;top:525.00px;font-size:5.9px;color:#606b76;font-weight:normal;letter-spacing:0.08px">D</div>
<div class="t" style="left:458.60px;top:521.00px;font-size:5.9px;color:#606b76;font-weight:normal;letter-spacing:0.08px">Medium</div>
<div class="t" style="left:497.80px;top:521.00px;font-size:5.9px;color:#606b76;font-weight:normal;letter-spacing:0.08px">Switch</div>
<div class="t" style="left:539.40px;top:521.00px;font-size:5.9px;color:#606b76;font-weight:normal;letter-spacing:0.08px">192.168.5.28</div>
<div class="t" style="left:590.80px;top:517.00px;font-size:5.9px;color:#606b76;font-weight:normal;letter-spacing:0.08px">WS-</div>
<div class="t" style="left:590.80px;top:525.00px;font-size:5.9px;color:#606b76;font-weight:normal;letter-spacing:0.08px">C3850</div>
<div class="t" style="left:621.90px;top:521.00px;font-size:5.9px;color:#606b76;font-weight:normal;letter-spacing:0.08px">IOS 16.3</div>
<div class="t" style="left:683.20px;top:521.00px;font-size:5.9px;color:#606b76;font-weight:normal;letter-spacing:0.08px">Distribution</div>
<div class="t" style="left:719.90px;top:521.00px;font-size:5.9px;color:#606b76;font-weight:normal;letter-spacing:0.08px">20</div>
<div class="t" style="left:781.00px;top:521.00px;font-size:5.9px;color:#606b76;font-weight:normal;letter-spacing:0.08px">Yes</div>
<div class="t" style="left:839.10px;top:521.00px;font-size:5.9px;color:#606b76;font-weight:normal;letter-spacing:0.08px">GigabitEthernet1/0/1</div>
<div class="t" style="left:899.10px;top:517.00px;font-size:5.9px;color:#606b76;font-weight:normal;letter-spacing:0.08px">2025-09-17</div>
<div class="t" style="left:899.10px;top:525.00px;font-size:5.9px;color:#606b76;font-weight:normal;letter-spacing:0.08px">16:04:38.8410</div>
<div class="t" style="left:68.50px;top:518.00px;font-size:5.9px;color:#606b76;letter-spacing:0.08px"><span style="color:#8a949c;font-size:5px">%</span> <b style="color:#343a40;background:rgba(255,255,255,0.3);border-radius:1px;padding:0 0.8px">LINEPROTO-5-UPDOWN <span style="color:#9aa4ad;font-weight:normal">~</span></b> : Line protocol on Int</div>
<div class="t" style="left:68.50px;top:526.00px;font-size:5.9px;color:#606b76;letter-spacing:0.08px">erface Ethernet0/2, changed state to down</div>
<div class="r" style="left:15.10px;top:543.20px;width:21.80px;height:7.20px;background:#c62f3a;border-radius:1.2px"></div><div class="t" style="left:-174.00px;width:400px;text-align:center;top:545.00px;font-size:4.3px;color:#f4fbf4;font-weight:bold;letter-spacing:0.05px">ERROR</div>
<div class="t" style="left:46.60px;top:540.00px;font-size:5.9px;color:#606b76;font-weight:normal;letter-spacing:0.08px">SW30</div>
<div class="t" style="left:212.70px;top:540.00px;font-size:5.9px;color:#606b76;font-weight:normal;letter-spacing:0.08px">Access</div>
<div class="t" style="left:256.50px;top:540.00px;font-size:5.9px;color:#606b76;font-weight:normal;letter-spacing:0.08px">300030</div>
<div class="t" style="left:287.10px;top:536.00px;font-size:5.9px;color:#606b76;font-weight:normal;letter-spacing:0.08px">LINK-3-</div>
<div class="t" style="left:287.10px;top:544.00px;font-size:5.9px;color:#606b76;font-weight:normal;letter-spacing:0.08px">UPDOWN</div>
<div class="t" style="left:338.30px;top:540.00px;font-size:5.9px;color:#606b76;font-weight:normal;letter-spacing:0.08px">Hank Pym</div>
<div class="t" style="left:372.90px;top:540.00px;font-size:5.9px;color:#606b76;font-weight:normal;letter-spacing:0.08px">202-555-0030</div>
<div class="t" style="left:424.70px;top:536.00px;font-size:5.9px;color:#606b76;font-weight:normal;letter-spacing:0.08px">Building-</div>
<div class="t" style="left:424.70px;top:544.00px;font-size:5.9px;color:#606b76;font-weight:normal;letter-spacing:0.08px">B</div>
<div class="t" style="left:458.60px;top:540.00px;font-size:5.9px;color:#606b76;font-weight:normal;letter-spacing:0.08px">Low</div>
<div class="t" style="left:497.80px;top:540.00px;font-size:5.9px;color:#606b76;font-weight:normal;letter-spacing:0.08px">Switch</div>
<div class="t" style="left:539.40px;top:540.00px;font-size:5.9px;color:#606b76;font-weight:normal;letter-spacing:0.08px">192.168.5.30</div>
<div class="t" style="left:590.80px;top:536.00px;font-size:5.9px;color:#606b76;font-weight:normal;letter-spacing:0.08px">WS-</div>
<div class="t" style="left:590.80px;top:544.00px;font-size:5.9px;color:#606b76;font-weight:normal;letter-spacing:0.08px">C3850</div>
<div class="t" style="left:621.90px;top:540.00px;font-size:5.9px;color:#606b76;font-weight:normal;letter-spacing:0.08px">IOS 15.2</div>
<div class="t" style="left:683.20px;top:540.00px;font-size:5.9px;color:#606b76;font-weight:normal;letter-spacing:0.08px">Core</div>
<div class="t" style="left:719.90px;top:540.00px;font-size:5.9px;color:#606b76;font-weight:normal;letter-spacing:0.08px">10</div>
<div class="t" style="left:781.00px;top:540.00px;font-size:5.9px;color:#606b76;font-weight:normal;letter-spacing:0.08px">Yes</div>
<div class="t" style="left:839.10px;top:540.00px;font-size:5.9px;color:#606b76;font-weight:normal;letter-spacing:0.08px">GigabitEthernet1/0/1</div>
<div class="t" style="left:899.10px;top:536.00px;font-size:5.9px;color:#606b76;font-weight:normal;letter-spacing:0.08px">2025-09-17</div>
<div class="t" style="left:899.10px;top:544.00px;font-size:5.9px;color:#606b76;font-weight:normal;letter-spacing:0.08px">16:04:55.7530</div>
<div class="t" style="left:68.50px;top:537.00px;font-size:5.9px;color:#606b76;letter-spacing:0.08px"><span style="color:#8a949c;font-size:5px">%</span> <b style="color:#343a40;background:rgba(255,255,255,0.3);border-radius:1px;padding:0 0.8px">LINK-3-UPDOWN <span style="color:#9aa4ad;font-weight:normal">~</span></b> : Interface Ethernet0/2, cha</div>
<div class="t" style="left:68.50px;top:545.00px;font-size:5.9px;color:#606b76;letter-spacing:0.08px">nged state to up</div>
</div></div>
<div class="r" style="left:957.00px;top:463.50px;width:1.60px;height:60.90px;background:#b9c3ca;border-radius:1px"></div>
</body></html>
